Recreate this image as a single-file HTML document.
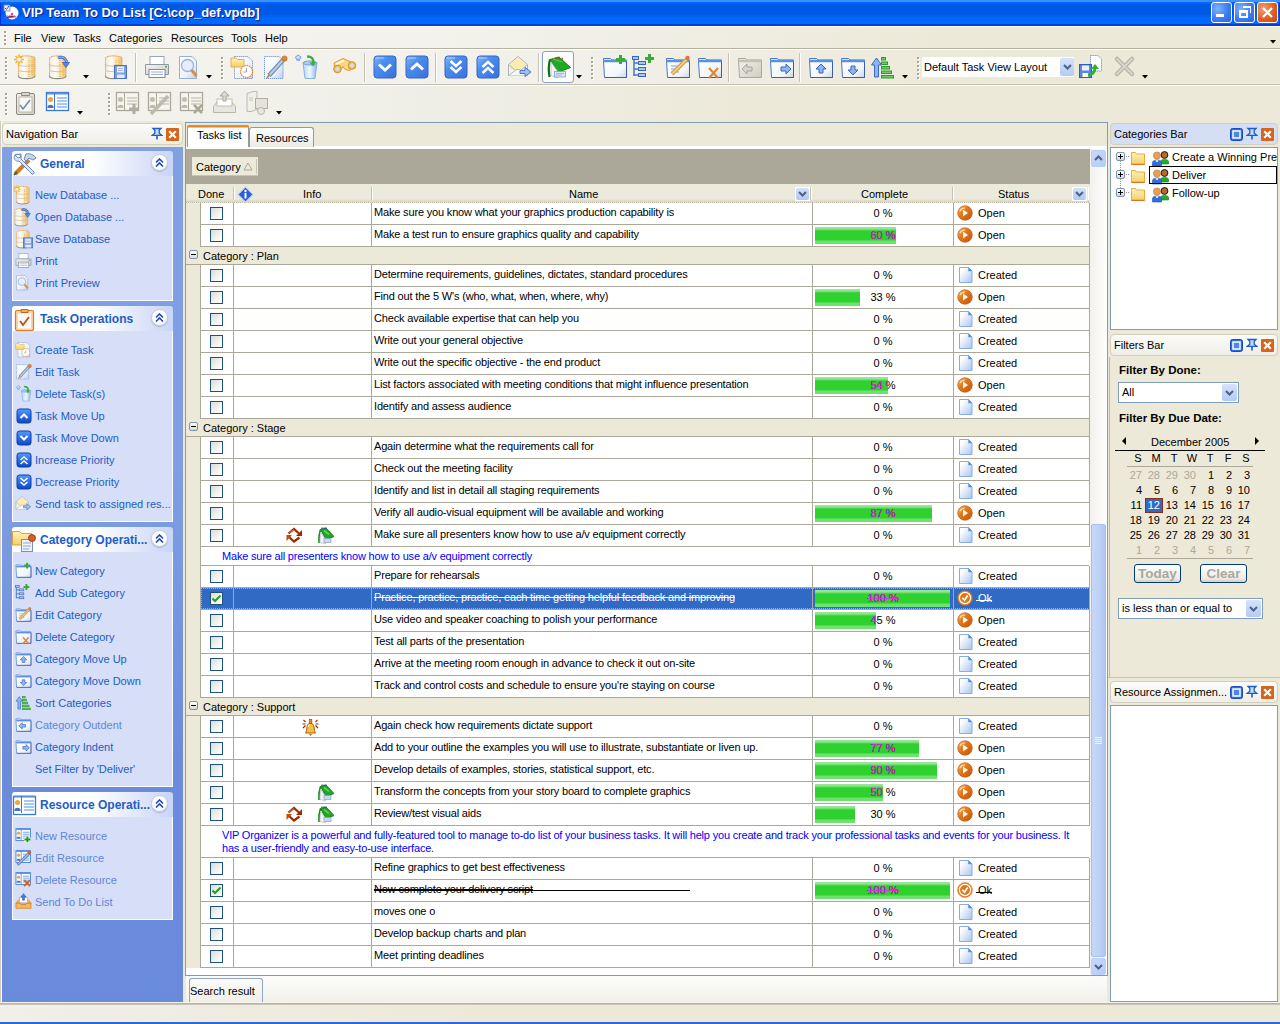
<!DOCTYPE html><html><head><meta charset="utf-8"><style>
*{margin:0;padding:0;box-sizing:border-box}
html,body{width:1280px;height:1024px;overflow:hidden;background:#ece9d8}
body{position:relative;font-family:"Liberation Sans",sans-serif;font-size:11px;color:#000}
div,svg{position:absolute}
.t{white-space:pre;line-height:13px;font-size:11px}
.ic{overflow:visible}
</style></head><body>
<svg width="0" height="0" style="position:absolute;left:0;top:0"><defs>
<linearGradient id="gCyl" x1="0" x2="1" y1="0" y2="0"><stop offset="0" stop-color="#f0ece0"/><stop offset=".35" stop-color="#fdfcf6"/><stop offset=".7" stop-color="#f2e2b8"/><stop offset="1" stop-color="#e8c070"/></linearGradient>
<linearGradient id="gBlueBtn" x1="0" x2="1" y1="0" y2="1"><stop offset="0" stop-color="#8ab8f8"/><stop offset=".35" stop-color="#4a8ef0"/><stop offset="1" stop-color="#3a70d8"/></linearGradient>
<linearGradient id="gPage" x1="0" x2="1" y1="0" y2="1"><stop offset="0" stop-color="#fff"/><stop offset=".6" stop-color="#eef3fc"/><stop offset="1" stop-color="#bcd0f0"/></linearGradient>
<linearGradient id="gFolderW" x1="0" x2="1" y1="0" y2="1"><stop offset="0" stop-color="#fff"/><stop offset=".7" stop-color="#f2f5fb"/><stop offset="1" stop-color="#c9d6ea"/></linearGradient>
<linearGradient id="gFolderY" x1="0" x2="0" y1="0" y2="1"><stop offset="0" stop-color="#fff2b8"/><stop offset="1" stop-color="#f3cf6a"/></linearGradient>
<linearGradient id="gOrange" x1="0" x2="1" y1="0" y2="1"><stop offset="0" stop-color="#f7c080"/><stop offset=".4" stop-color="#e57a1c"/><stop offset="1" stop-color="#c2520a"/></linearGradient>
<linearGradient id="gGreen" x1="0" x2="1" y1="0" y2="1"><stop offset="0" stop-color="#6ed66e"/><stop offset="1" stop-color="#18961c"/></linearGradient>
<linearGradient id="gBin" x1="0" x2="1"><stop offset="0" stop-color="#b8d6f8"/><stop offset=".5" stop-color="#eef6ff"/><stop offset="1" stop-color="#88b4e8"/></linearGradient>
<linearGradient id="gGrey" x1="0" x2="1" y1="0" y2="1"><stop offset="0" stop-color="#f4f3ee"/><stop offset="1" stop-color="#cfccc0"/></linearGradient>
<symbol id="tb_newdb" viewBox="0 0 26 26"><g transform="translate(0 0)"><path d="M4.5 4.5C4.5 1 21 1 21 4.5V22C21 25.5 4.5 25.5 4.5 22Z" fill="url(#gCyl)"/><path d="M4.5 22V4.5C4.5 1 21 1 21 4.5V22" stroke="#eea040" stroke-width="1.1" stroke-dasharray="1.2 .6" fill="none"/><path d="M4.5 22C4.5 25.5 21 25.5 21 22" stroke="#8c8a7c" stroke-width="1.2" fill="none"/><path d="M5 11c2 1.5 13 1.5 15 0M5 16.5c2 1.5 13 1.5 15 0" stroke="#c8c0a8" stroke-width=".9" fill="none"/><path d="M15 6v17M18 6v16" stroke="#f0b050" stroke-width="1.2" stroke-dasharray="1 1"/></g><path d="M5 .5v10M0 5.5h10M1.5 2l7 7M8.5 2l-7 7" stroke="#f8b030" stroke-width="1.6"/><circle cx="5" cy="5.5" r="2" fill="#fff8d0"/></symbol><symbol id="tb_opendb" viewBox="0 0 26 26"><g transform="translate(-2 0)"><path d="M4.5 4.5C4.5 1 21 1 21 4.5V22C21 25.5 4.5 25.5 4.5 22Z" fill="url(#gCyl)"/><path d="M4.5 22V4.5C4.5 1 21 1 21 4.5V22" stroke="#eea040" stroke-width="1.1" stroke-dasharray="1.2 .6" fill="none"/><path d="M4.5 22C4.5 25.5 21 25.5 21 22" stroke="#8c8a7c" stroke-width="1.2" fill="none"/><path d="M5 11c2 1.5 13 1.5 15 0M5 16.5c2 1.5 13 1.5 15 0" stroke="#c8c0a8" stroke-width=".9" fill="none"/><path d="M15 6v17M18 6v16" stroke="#f0b050" stroke-width="1.2" stroke-dasharray="1 1"/></g><path d="M11 4c4-2 7 0 9 4" stroke="#3a6ad0" stroke-width="3" fill="none"/><path d="M11 4c4-2 7 0 9 4" stroke="#8ab0f0" stroke-width="1.2" fill="none"/><path d="M15.5 8.5l7 0-3.5 5z" fill="#5a88e0" stroke="#2a5ac8" stroke-width=".8"/></symbol><symbol id="tb_savedb" viewBox="0 0 26 26"><path d="M4.5 4.5C4.5 1 21 1 21 4.5V22C21 25.5 4.5 25.5 4.5 22Z" fill="url(#gCyl)"/><path d="M4.5 22V4.5C4.5 1 21 1 21 4.5V22" stroke="#eea040" stroke-width="1.1" stroke-dasharray="1.2 .6" fill="none"/><path d="M4.5 22C4.5 25.5 21 25.5 21 22" stroke="#8c8a7c" stroke-width="1.2" fill="none"/><path d="M5 11c2 1.5 13 1.5 15 0M5 16.5c2 1.5 13 1.5 15 0" stroke="#c8c0a8" stroke-width=".9" fill="none"/><path d="M15 6v17M18 6v16" stroke="#f0b050" stroke-width="1.2" stroke-dasharray="1 1"/><rect x="13.5" y="11.5" width="12" height="13" fill="#7a9ee0" stroke="#4a70c0"/><rect x="16" y="12.5" width="7" height="6" fill="#f0f4fc"/><path d="M17 14.5h5M17 16.5h5" stroke="#8aa8e0" stroke-width=".8"/><rect x="16" y="20.5" width="7.5" height="3.5" fill="#e8eaf0"/></symbol><symbol id="tb_print" viewBox="0 0 26 26"><rect x="6" y="2.5" width="14" height="8" fill="#fff" stroke="#9aa6b8"/><path d="M1.5 10.5h23v10h-23z" fill="url(#gGrey)" stroke="#8d96a8"/><rect x="5" y="15.5" width="16" height="8" fill="#fff" stroke="#7c8aa8"/><path d="M7 18h12M7 20.5h12" stroke="#9ab0d8"/><rect x="21" y="12" width="2" height="1.5" fill="#30c030"/></symbol><symbol id="tb_preview" viewBox="0 0 26 26"><path d="M2.5 2.5H15l4.5 4.5V24.5H2.5Z" fill="url(#gPage)" stroke="#9aaed0"/><circle cx="10.5" cy="11.5" r="6" fill="#e6eefa" stroke="#9ab4d8" stroke-width="1.3"/><path d="M14.5 16l5 6" stroke="#d89040" stroke-width="3"/></symbol><symbol id="tb_createtask" viewBox="0 0 26 26"><path d="M4.5 2.5H18l4.5 4.5V24.5H4.5Z" fill="url(#gPage)" stroke="#7a9ad0" stroke-dasharray="1.3 .7"/><path d="M1 4h5l1.5 1.5H14V13H1Z" fill="url(#gFolderY)" stroke="#e8b050"/><circle cx="16.5" cy="17.5" r="6" fill="#fff" stroke="#e08838" stroke-width="1.3" stroke-dasharray="1.5 .8"/><path d="M16.5 14v4h-3" stroke="#a0a0a0" fill="none"/></symbol><symbol id="tb_edittask" viewBox="0 0 26 26"><path d="M2.5 2.5H17l4 4V24.5H2.5Z" fill="url(#gPage)" stroke="#7a9ad0" stroke-dasharray="1.3 .7"/><path d="M7 21.5L22 5" stroke="#7a8aa8" stroke-width="4.5"/><path d="M7.5 21L21.5 5.5" stroke="#b8cdf0" stroke-width="2"/><circle cx="22.5" cy="4.5" r="2.6" fill="#e08838" stroke="#b05a18" stroke-width=".6"/><path d="M5 24l2.5-3.5" stroke="#d07a30" stroke-width="1.6"/></symbol><symbol id="tb_deltask" viewBox="0 0 26 26"><path d="M10 8.5h14l-2 16H12Z" fill="url(#gBin)" stroke="#8ab0e0"/><ellipse cx="17" cy="9" rx="7" ry="2" fill="#a8cbf4" stroke="#7aa4dc"/><path d="M2 3.5l3-2.5 3 2-2 3.5zM3 6h4" stroke="#7a9ae0" fill="#c8dcf8"/><path d="M14 2.5c5 0 7 2.5 6 7" stroke="#3cb03c" stroke-width="2.5" fill="none"/><path d="M16.5 8.5l3.5 4 3-4.5z" fill="#3cb03c"/></symbol><symbol id="tb_binoc" viewBox="0 0 26 26"><path d="M3 9l9-4.5 9 4-2 8-5-1-2-3-2 3-6 2z" fill="#f8d880" stroke="#e09830"/><circle cx="6.5" cy="15" r="3.8" fill="#f4c050" stroke="#d89030"/><circle cx="21" cy="11.5" r="3.8" fill="#f4c050" stroke="#d89030"/><circle cx="6.5" cy="15" r="2" fill="#cde0f8"/><circle cx="21" cy="11.5" r="2" fill="#cde0f8"/><path d="M5 10l8-3.5" stroke="#fff" stroke-width="1.5"/></symbol><symbol id="tb_down" viewBox="0 0 26 26"><rect x="2" y="2" width="22" height="22" rx="3" fill="url(#gBlueBtn)" stroke="#3467c6"/><path d="M4 4h8" stroke="#b8d4ff" stroke-width="1.5" opacity=".6"/><path d="M7 10.5l6 5.5 6-5.5" stroke="#fff" stroke-width="3" fill="none"/></symbol><symbol id="tb_up" viewBox="0 0 26 26"><rect x="2" y="2" width="22" height="22" rx="3" fill="url(#gBlueBtn)" stroke="#3467c6"/><path d="M4 4h8" stroke="#b8d4ff" stroke-width="1.5" opacity=".6"/><path d="M7 15.5l6-5.5 6 5.5" stroke="#fff" stroke-width="3" fill="none"/></symbol><symbol id="tb_ddown" viewBox="0 0 26 26"><rect x="2" y="2" width="22" height="22" rx="3" fill="url(#gBlueBtn)" stroke="#3467c6"/><path d="M4 4h8" stroke="#b8d4ff" stroke-width="1.5" opacity=".6"/><path d="M7.5 7l5.5 5 5.5-5M7.5 13l5.5 5 5.5-5" stroke="#fff" stroke-width="2.5" fill="none"/></symbol><symbol id="tb_dup" viewBox="0 0 26 26"><rect x="2" y="2" width="22" height="22" rx="3" fill="url(#gBlueBtn)" stroke="#3467c6"/><path d="M4 4h8" stroke="#b8d4ff" stroke-width="1.5" opacity=".6"/><path d="M7.5 13l5.5-5 5.5 5M7.5 19l5.5-5 5.5 5" stroke="#fff" stroke-width="2.5" fill="none"/></symbol><symbol id="tb_mail" viewBox="0 0 26 26"><path d="M1.5 10.5L11 2.5l9.5 8V21.5h-19z" fill="#f4f4f4" stroke="#a8b0c0"/><path d="M3 10l8-6 8 6v6H3z" fill="#fbecb0"/><path d="M1.5 21.5l8-6h3l8 6M1.5 10.5l7 6M20.5 10.5l-7 6" stroke="#b0b8c8" fill="#f8f8f8"/><path d="M13 16.5h5v-3l6 4.5-6 4.5v-3h-5z" fill="#a0c0f0" stroke="#4a78d0"/></symbol><symbol id="tb_notebook" viewBox="0 0 26 26"><path d="M5 5.5L14 3 25.5 13.5 13 18.5z" fill="#22a822" stroke="#137a13" stroke-width=".9"/><path d="M8 5l9 3" stroke="#5ad05a" stroke-width="1.2"/><path d="M5 5.5C3.5 11 3.5 17 4.5 23" stroke="#0e6e0e" stroke-width="2.2" fill="none"/><path d="M6 8l7 10v6l-7-2.5z" fill="#f6f6f6" stroke="#b0bcd0" stroke-width=".8"/><rect x="9.5" y="17.5" width="11" height="5.5" fill="#dce6f8" stroke="#8aa0c8" stroke-width=".8"/><path d="M11 19.5h8M11 21h6" stroke="#8aa8d8" stroke-width=".7"/><path d="M11 3.2l.5 2M14 2.8l.5 2M17 3.6l.5 2" stroke="#d03030" stroke-width="1.2"/></symbol><symbol id="tb_newcat" viewBox="0 0 26 26"><path d="M1.5 6.5V4.5h7l1.5 1.5H24.5V23.5H2.5Z" fill="url(#gFolderW)" stroke="#4a78c8"/><path d="M2 7H24.5" stroke="#5a90e0" stroke-width="2.5"/><path d="M3 23.5H24.5V8" stroke="#3c5ea8" stroke-width="1" fill="none"/><path d="M18.5 1v9M14 5.5h9" stroke="#3aa83a" stroke-width="3"/></symbol><symbol id="tb_subcat" viewBox="0 0 26 26"><path d="M2 4v18M2 9h4M2 15h4M2 21h4" stroke="#4a78d0" stroke-width="1.5"/><rect x="0.5" y="2.5" width="6" height="3" fill="#a8c8f4" stroke="#3a68c0"/><rect x="6.5" y="7.5" width="7" height="3" fill="#a8c8f4" stroke="#3a68c0"/><rect x="6.5" y="13.5" width="7" height="3" fill="#a8c8f4" stroke="#3a68c0"/><rect x="6.5" y="19.5" width="7" height="3" fill="#a8c8f4" stroke="#3a68c0"/><path d="M17.5 0v9M13 4.5h9" stroke="#3aa83a" stroke-width="3"/></symbol><symbol id="tb_editcat" viewBox="0 0 26 26"><path d="M1.5 6.5V4.5h7l1.5 1.5H24.5V23.5H2.5Z" fill="url(#gFolderW)" stroke="#4a78c8"/><path d="M2 7H24.5" stroke="#5a90e0" stroke-width="2.5"/><path d="M3 23.5H24.5V8" stroke="#3c5ea8" stroke-width="1" fill="none"/><path d="M6 12h10M6 15h9M6 18h8" stroke="#7aa0e0"/><path d="M7 20L22 5" stroke="#d8a040" stroke-width="4"/><path d="M7.5 19.5L21.5 5.5" stroke="#f8d890" stroke-width="1.5"/><circle cx="22.5" cy="4" r="2.2" fill="#e07050"/></symbol><symbol id="tb_delcat" viewBox="0 0 26 26"><path d="M1.5 6.5V4.5h7l1.5 1.5H24.5V23.5H2.5Z" fill="url(#gFolderW)" stroke="#4a78c8"/><path d="M2 7H24.5" stroke="#5a90e0" stroke-width="2.5"/><path d="M3 23.5H24.5V8" stroke="#3c5ea8" stroke-width="1" fill="none"/><path d="M12 14l9 10M21 14l-9 10" stroke="#e08830" stroke-width="2.2"/></symbol><symbol id="tb_catleft" viewBox="0 0 26 26"><path d="M1.5 6.5V4.5h7l1.5 1.5H24.5V23.5H2.5Z" fill="url(#gGrey)" stroke="#aaa898"/><path d="M2 7H24.5" stroke="#c5c2b4" stroke-width="2.5"/><path d="M5 15l5-5v3h5v4h-5v3z" fill="#d8d6cc" stroke="#a8a698"/></symbol><symbol id="tb_catright" viewBox="0 0 26 26"><path d="M1.5 6.5V4.5h7l1.5 1.5H24.5V23.5H2.5Z" fill="url(#gFolderW)" stroke="#4a78c8"/><path d="M2 7H24.5" stroke="#5a90e0" stroke-width="2.5"/><path d="M3 23.5H24.5V8" stroke="#3c5ea8" stroke-width="1" fill="none"/><path d="M22 15l-5-5v3h-5v4h5v3z" fill="#90b4f0" stroke="#3a68c0"/></symbol><symbol id="tb_catup" viewBox="0 0 26 26"><path d="M1.5 6.5V4.5h7l1.5 1.5H24.5V23.5H2.5Z" fill="url(#gFolderW)" stroke="#4a78c8"/><path d="M2 7H24.5" stroke="#5a90e0" stroke-width="2.5"/><path d="M3 23.5H24.5V8" stroke="#3c5ea8" stroke-width="1" fill="none"/><path d="M13 10l-5 5h3v4h4v-4h3z" fill="#90b4f0" stroke="#3a68c0"/></symbol><symbol id="tb_catdown" viewBox="0 0 26 26"><path d="M1.5 6.5V4.5h7l1.5 1.5H24.5V23.5H2.5Z" fill="url(#gFolderW)" stroke="#4a78c8"/><path d="M2 7H24.5" stroke="#5a90e0" stroke-width="2.5"/><path d="M3 23.5H24.5V8" stroke="#3c5ea8" stroke-width="1" fill="none"/><path d="M13 21l-5-5h3v-4h4v4h3z" fill="#90b4f0" stroke="#3a68c0"/></symbol><symbol id="tb_sort" viewBox="0 0 26 26"><path d="M4.5 23V11H1.5L6.5 4l5 7H8.5v12z" fill="#90b4f0" stroke="#3a68c0"/><rect x="11.5" y="3.5" width="4" height="2.5" fill="#70c870" stroke="#2e9a2e"/><rect x="11.5" y="8" width="6" height="2.5" fill="#70c870" stroke="#2e9a2e"/><rect x="11.5" y="12.5" width="8" height="2.5" fill="#70c870" stroke="#2e9a2e"/><rect x="11.5" y="17" width="10" height="2.5" fill="#70c870" stroke="#2e9a2e"/><rect x="11.5" y="21.5" width="12" height="2.5" fill="#70c870" stroke="#2e9a2e"/></symbol><symbol id="tb_savelayout" viewBox="0 0 26 26"><path d="M12.5 1.5H20l3.5 3.5V17h-11z" fill="#fff" stroke="#7a9ad0" stroke-dasharray="1.3 .7"/><rect x="1.5" y="10.5" width="12" height="13" fill="#5a86d8" stroke="#2e5cb8"/><rect x="4" y="11.5" width="7" height="5" fill="#e8f0fc"/><rect x="4.5" y="19" width="6" height="4" fill="#fff"/><path d="M10 21c4 0 7-3 7-7" stroke="#30b030" stroke-width="3" fill="none"/><path d="M13 15l4-5 4 5z" fill="#30b030"/></symbol><symbol id="tb_xdis" viewBox="0 0 26 26"><path d="M5 5l15 15M20 5L5 20" stroke="#b6b4a8" stroke-width="4.5" stroke-linecap="round"/><path d="M5 5l15 15M20 5L5 20" stroke="#d8d6cc" stroke-width="2" stroke-linecap="round"/></symbol><symbol id="tb_clip" viewBox="0 0 26 26"><rect x="2.5" y="3.5" width="18" height="21" rx="1.5" fill="url(#gGrey)" stroke="#8c8a80"/><rect x="5" y="7" width="13" height="15" fill="#f8f8f6" stroke="#b8b6aa"/><path d="M7.5 2.5h8v3h-8z" fill="#dcdad0" stroke="#8c8a80"/><path d="M6 15l3 4 7-9" stroke="#7a8aa8" stroke-width="1.6" fill="none"/></symbol><symbol id="tb_res" viewBox="0 0 26 26"><rect x="1.5" y="2.5" width="22" height="18" fill="#fff" stroke="#3a78d8" stroke-width="1.3"/><path d="M2 3.5H23" stroke="#5a90e8" stroke-width="2"/><path d="M9.5 3v17" stroke="#3a78d8"/><circle cx="5.5" cy="9.5" r="2.5" fill="#f0a830"/><path d="M2.5 17c0-3 6-3 6 0v1h-6z" fill="#4a70c8"/><path d="M12 8h10M12 11h10M12 14h10M12 17h10" stroke="#4a90e8" stroke-width="1.2"/></symbol><symbol id="tb_resadd" viewBox="0 0 26 26"><rect x="1.5" y="2.5" width="22" height="18" fill="#f6f5f0" stroke="#aaa898" stroke-width="1.3"/><path d="M9.5 3v17" stroke="#aaa898"/><circle cx="5.5" cy="9.5" r="2.5" fill="#c0beb2"/><path d="M2.5 17c0-3 6-3 6 0v1h-6z" fill="#bcbaae"/><path d="M12 8h10M12 11h10M12 14h10" stroke="#b5b3a6" stroke-width="1.2"/><path d="M19 14v10M14 19h10" stroke="#b0aea2" stroke-width="3"/></symbol><symbol id="tb_resedit" viewBox="0 0 26 26"><rect x="1.5" y="2.5" width="22" height="18" fill="#f6f5f0" stroke="#aaa898" stroke-width="1.3"/><path d="M9.5 3v17" stroke="#aaa898"/><circle cx="5.5" cy="9.5" r="2.5" fill="#c0beb2"/><path d="M2.5 17c0-3 6-3 6 0v1h-6z" fill="#bcbaae"/><path d="M12 8h10M12 11h10M12 14h10" stroke="#b5b3a6" stroke-width="1.2"/><path d="M4 24L21 6" stroke="#bdbbb0" stroke-width="3.5"/></symbol><symbol id="tb_resdel" viewBox="0 0 26 26"><rect x="1.5" y="2.5" width="22" height="18" fill="#f6f5f0" stroke="#aaa898" stroke-width="1.3"/><path d="M9.5 3v17" stroke="#aaa898"/><circle cx="5.5" cy="9.5" r="2.5" fill="#c0beb2"/><path d="M2.5 17c0-3 6-3 6 0v1h-6z" fill="#bcbaae"/><path d="M12 8h10M12 11h10M12 14h10" stroke="#b5b3a6" stroke-width="1.2"/><path d="M15 15l8 8M23 15l-8 8" stroke="#a8a698" stroke-width="2.5"/></symbol><symbol id="tb_send" viewBox="0 0 26 26"><path d="M1.5 16.5l4-5h14l4 5v6h-22z" fill="#e8e6de" stroke="#b8b6aa"/><rect x="5" y="9" width="15" height="7" fill="#fff" stroke="#c0beb2"/><path d="M12.5 1l-4.5 5h3v5h3V6h3z" fill="#dcdad0" stroke="#a8a698"/></symbol><symbol id="tb_rescomp" viewBox="0 0 26 26"><path d="M3 3.5l6-2h4v18l-6 2H3z" fill="#f0efe8" stroke="#bcbab0"/><rect x="11.5" y="8.5" width="12" height="10" fill="#e4e2da" stroke="#b0aea2"/><circle cx="17" cy="21" r="3.5" fill="#e8e6de" stroke="#b8b6aa"/><path d="M5 8h4M5 10h4" stroke="#c8c6ba"/></symbol><symbol id="appicon" viewBox="0 0 16 16"><circle cx="9" cy="9" r="6.5" fill="#fff"/><rect x="1" y="1" width="6" height="6" fill="#e8ecf4" stroke="#7a8ab0" stroke-width=".8"/><path d="M2 4l1.5 1.5L6 2" stroke="#3a5ab0" fill="none"/><path d="M3 14c2-2 6-3 10-1" stroke="#e03a9a" stroke-width="2.5" stroke-dasharray="1 1"/><circle cx="9" cy="10" r="1.2" fill="#d040a0"/></symbol><symbol id="hb_close" viewBox="0 0 13 13"><rect x="0" y="0" width="13" height="13" rx="1" fill="#d8641c"/><path d="M3.2 3.2l6.6 6.6M9.8 3.2l-6.6 6.6" stroke="#fff" stroke-width="2.2"/></symbol><symbol id="hb_pin" viewBox="0 0 12 13"><path d="M2 1.5h8l-1.8 1.8v3l2.5 2H1.3l2.5-2v-3z" fill="#c8dcfa" stroke="#1e5cc8" stroke-width="1.3"/><path d="M6 8.5v4" stroke="#1e5cc8" stroke-width="1.6"/></symbol><symbol id="hb_max" viewBox="0 0 13 13"><rect x=".5" y=".5" width="12" height="12" rx="2" fill="#2f6ee0" stroke="#1a4cc0"/><rect x="3" y="3" width="7" height="7" fill="#4a88f0" stroke="#fff" stroke-width="1.5"/></symbol><symbol id="gs_open" viewBox="0 0 16 16"><circle cx="8" cy="8" r="7.3" fill="url(#gOrange)" stroke="#b84e10" stroke-width=".6"/><path d="M6 4.5v7l5-3.5z" fill="#fff8e8"/><path d="M3 6c1-2 3-3 5-3" stroke="#fde0b0" stroke-width="1.2" fill="none"/></symbol><symbol id="gs_ok" viewBox="0 0 16 16"><circle cx="8" cy="8" r="7.5" fill="#e8801c" stroke="#d06010" stroke-width=".6" stroke-dasharray="1 .6"/><circle cx="8" cy="8" r="5.6" fill="#e07818" stroke="#fff" stroke-width="1.2"/><path d="M5.3 7.8l2.2 2.4 3.2-4.6" stroke="#fff" stroke-width="1.7" fill="none"/></symbol><symbol id="gs_created" viewBox="0 0 16 16"><linearGradient id="gDoc" x1="0" y1="0" x2="1" y2="1"><stop offset=".2" stop-color="#fff"/><stop offset="1" stop-color="#a8c4f0"/></linearGradient><path d="M.5 .5H9.5l3.5 3.5V15.5H.5z" fill="url(#gDoc)" stroke="#86acea" stroke-width="1"/><path d="M9.5 .5V4H13z" fill="#3e8ef0" stroke="#6a9ae0" stroke-width=".6"/></symbol><symbol id="hd_info" viewBox="0 0 17 17"><path d="M8.5 .8L16.2 8.5 8.5 16.2 .8 8.5z" fill="#2a5ed8" stroke="#c8d8f8" stroke-width="1.2"/><circle cx="8.5" cy="5" r="1.2" fill="#fff"/><rect x="7.5" y="7" width="2" height="5.5" fill="#fff"/></symbol><symbol id="gi_recur" viewBox="0 0 16 16"><path d="M2.5 6.5L8 2l5 4.5" stroke="#a02a00" stroke-width="2.2" fill="none"/><path d="M10 9h6.5V2.5z" fill="#a02a00"/><path d="M13.5 10.5L8 14.5 2.5 9.5" stroke="#a02a00" stroke-width="2.2" fill="none"/><path d="M6 8H.5v6z" fill="#c04a08"/><path d="M3 6l5-3.5" stroke="#f08030" stroke-width=".8"/></symbol><symbol id="gi_note" viewBox="0 0 18 18"><path d="M4.5 2.5L10 1l8 8.5-8 3z" fill="#22a822" stroke="#0e7a0e" stroke-width=".9"/><path d="M8 3.5l5 4" stroke="#6ad86a" stroke-width="1.4"/><path d="M5 1.2h6" stroke="#2a50c0" stroke-width="1"/><path d="M4.5 2.5C3 7 2.5 12 3 16" stroke="#0e8a0e" stroke-width="1.6" fill="none"/><path d="M4.5 5l5 7.5v4.5L4 15.5z" fill="#f4f4f4" stroke="#b0bcd0" stroke-width=".7"/><rect x="8" y="11.5" width="7" height="4" fill="#c8d8f4" stroke="#8aa0c8" stroke-width=".7"/></symbol><symbol id="gi_bell" viewBox="0 0 19 19"><path d="M4.5 15c1-1 1-3 1.5-6 .5-3 1.5-3.5 3.5-3.5s3 .5 3.5 3.5c.5 3 .5 5 1.5 6z" fill="#f6c040" stroke="#b85808" stroke-width="1"/><rect x="8.3" y="1.5" width="2.5" height="4" fill="#e89030" stroke="#a04808" stroke-width=".7"/><path d="M8 16l1.5 2 1.5-2" fill="#c06010"/><path d="M1.5 6h3M14.5 6h3M2.5 2l2 2M16.5 2l-2 2M2 10l2.5-2.5M17 10l-2.5-2.5" stroke="#902a00" stroke-width="1.1"/><path d="M7 9c.5-2 1-2.5 2-2.5" stroke="#fff8c0" stroke-width="1.2" fill="none"/></symbol><symbol id="ct_folder" viewBox="0 0 14 13"><path d="M.5 2.5V.5h4l1 1.5H13.5V12.5H.5z" fill="url(#gFolderY)" stroke="#e8a030" stroke-width=".9"/><path d="M.5 12.5h13" stroke="#d87818" stroke-width="1.5"/></symbol><symbol id="ct_people" viewBox="0 0 17 16"><circle cx="12.5" cy="4" r="3.4" fill="#b8682c" stroke="#1a1a1a" stroke-width="1"/><path d="M8.5 13V10.5c0-2.8 8-2.8 8 0V13z" fill="#1fae2a" stroke="#108010" stroke-width=".6"/><circle cx="5" cy="4.5" r="3.6" fill="#e8a050" stroke="#b87a38" stroke-width=".6"/><path d="M.5 15V11.5c0-3.5 9-3.5 9 0V15z" fill="#2f6fe0" stroke="#1a50b0" stroke-width=".6"/><path d="M4 9l1 2 1-2" stroke="#fff" stroke-width="1" fill="none"/></symbol><symbol id="ng_general" viewBox="0 0 26 24"><path d="M3 22L17 8" stroke="#d87a28" stroke-width="4"/><path d="M2 23l3-3" stroke="#208030" stroke-width="2"/><path d="M3 3c3-2 7 0 6 4l13 13c1 1-1 3-2 2L7 9C3 10 1 6 3 3l3 3 3-1 0-3z" fill="#dce8f8" stroke="#6a88b8" stroke-width="1"/><path d="M14 2c4-1 8 1 10 4l-3 2-4-2-3 3-2-2z" fill="#c8d8ec" stroke="#6a88b8" stroke-width="1"/></symbol><symbol id="ng_task" viewBox="0 0 26 24"><rect x="3.5" y="3.5" width="18" height="20" rx="1.5" fill="#f4d8a8" stroke="#d87a28" stroke-width="1.2"/><rect x="6" y="6.5" width="13" height="15" fill="#fbfaf6"/><path d="M9 2.5h7v3H9z" fill="#e8b070" stroke="#c06820"/><path d="M8 14l3 4 6-8" stroke="#c05010" stroke-width="1.8" fill="none"/></symbol><symbol id="ng_cat" viewBox="0 0 26 24"><path d="M.5 7V3.5h7l2 2h10V17H.5z" fill="url(#gFolderY)" stroke="#e0a040"/><rect x="9.5" y="11.5" width="11" height="12" fill="#eef2fa" stroke="#7a90b8"/><path d="M11 15h8M11 18h8M11 21h6" stroke="#90a8d0"/><circle cx="20" cy="10" r="3.5" fill="#d86020" stroke="#8a3010" stroke-width=".8"/></symbol><symbol id="ng_res" viewBox="0 0 26 24"><rect x="1.5" y="3.5" width="22" height="18" fill="#fff" stroke="#3a78d8" stroke-width="1.3"/><path d="M2 3.5H23" stroke="#5a90e8" stroke-width="2"/><path d="M9.5 3v17" stroke="#3a78d8"/><circle cx="5.5" cy="9.5" r="2.5" fill="#f0a830"/><path d="M2.5 17c0-3 6-3 6 0v1h-6z" fill="#4a70c8"/><path d="M12 8h10M12 11h10M12 14h10M12 17h10" stroke="#4a90e8" stroke-width="1.2"/></symbol><symbol id="ni_up" viewBox="0 0 16 16"><linearGradient id="gNavBtn" x1="0" y1="0" x2="0" y2="1"><stop offset="0" stop-color="#5a9af8"/><stop offset=".5" stop-color="#2a6ee8"/><stop offset="1" stop-color="#0c48c0"/></linearGradient><rect x="1" y="1" width="14" height="14" rx="2.5" fill="url(#gNavBtn)" stroke="#0a3ca8"/><path d="M4.5 10l3.5-3.5 3.5 3.5" stroke="#fff" stroke-width="2" fill="none"/></symbol><symbol id="ni_down" viewBox="0 0 16 16"><linearGradient id="gNavBtn" x1="0" y1="0" x2="0" y2="1"><stop offset="0" stop-color="#5a9af8"/><stop offset=".5" stop-color="#2a6ee8"/><stop offset="1" stop-color="#0c48c0"/></linearGradient><rect x="1" y="1" width="14" height="14" rx="2.5" fill="url(#gNavBtn)" stroke="#0a3ca8"/><path d="M4.5 6l3.5 3.5 3.5-3.5" stroke="#fff" stroke-width="2" fill="none"/></symbol><symbol id="ni_dup" viewBox="0 0 16 16"><linearGradient id="gNavBtn" x1="0" y1="0" x2="0" y2="1"><stop offset="0" stop-color="#5a9af8"/><stop offset=".5" stop-color="#2a6ee8"/><stop offset="1" stop-color="#0c48c0"/></linearGradient><rect x="1" y="1" width="14" height="14" rx="2.5" fill="url(#gNavBtn)" stroke="#0a3ca8"/><path d="M4.5 8l3.5-3 3.5 3M4.5 12l3.5-3 3.5 3" stroke="#fff" stroke-width="1.6" fill="none"/></symbol><symbol id="ni_ddown" viewBox="0 0 16 16"><linearGradient id="gNavBtn" x1="0" y1="0" x2="0" y2="1"><stop offset="0" stop-color="#5a9af8"/><stop offset=".5" stop-color="#2a6ee8"/><stop offset="1" stop-color="#0c48c0"/></linearGradient><rect x="1" y="1" width="14" height="14" rx="2.5" fill="url(#gNavBtn)" stroke="#0a3ca8"/><path d="M4.5 4l3.5 3 3.5-3M4.5 8l3.5 3 3.5-3" stroke="#fff" stroke-width="1.6" fill="none"/></symbol><symbol id="ni_newdb" viewBox="0 0 26 26"><use href="#tb_newdb" width="26" height="26"/></symbol><symbol id="ni_opendb" viewBox="0 0 26 26"><use href="#tb_opendb" width="26" height="26"/></symbol><symbol id="ni_savedb" viewBox="0 0 26 26"><use href="#tb_savedb" width="26" height="26"/></symbol><symbol id="ni_print" viewBox="0 0 26 26"><use href="#tb_print" width="26" height="26"/></symbol><symbol id="ni_preview" viewBox="0 0 26 26"><use href="#tb_preview" width="26" height="26"/></symbol><symbol id="ni_createtask" viewBox="0 0 26 26"><use href="#tb_createtask" width="26" height="26"/></symbol><symbol id="ni_edittask" viewBox="0 0 26 26"><use href="#tb_edittask" width="26" height="26"/></symbol><symbol id="ni_deltask" viewBox="0 0 26 26"><use href="#tb_deltask" width="26" height="26"/></symbol><symbol id="ni_send" viewBox="0 0 26 26"><use href="#tb_mail" width="26" height="26"/></symbol><symbol id="ni_newcat" viewBox="0 0 26 26"><use href="#tb_newcat" width="26" height="26"/></symbol><symbol id="ni_subcat" viewBox="0 0 26 26"><use href="#tb_subcat" width="26" height="26"/></symbol><symbol id="ni_editcat" viewBox="0 0 26 26"><use href="#tb_editcat" width="26" height="26"/></symbol><symbol id="ni_delcat" viewBox="0 0 26 26"><use href="#tb_delcat" width="26" height="26"/></symbol><symbol id="ni_catup" viewBox="0 0 26 26"><use href="#tb_catup" width="26" height="26"/></symbol><symbol id="ni_catdown" viewBox="0 0 26 26"><use href="#tb_catdown" width="26" height="26"/></symbol><symbol id="ni_sort" viewBox="0 0 26 26"><use href="#tb_sort" width="26" height="26"/></symbol><symbol id="ni_indent" viewBox="0 0 26 26"><use href="#tb_catright" width="26" height="26"/></symbol><symbol id="ni_resadd" viewBox="0 0 26 26"><rect x="1.5" y="2.5" width="22" height="18" fill="#fff" stroke="#3a78d8" stroke-width="1.3"/><path d="M2 3.5H23" stroke="#5a90e8" stroke-width="2"/><path d="M9.5 3v17" stroke="#3a78d8"/><circle cx="5.5" cy="9.5" r="2.5" fill="#f0a830"/><path d="M2.5 17c0-3 6-3 6 0v1h-6z" fill="#4a70c8"/><path d="M12 8h10M12 11h10M12 14h10M12 17h10" stroke="#4a90e8" stroke-width="1.2"/><path d="M19 14v10M14 19h10" stroke="#fff" stroke-width="5"/><path d="M19 14.5v9M14.5 19h9" stroke="#1a9a1a" stroke-width="3"/></symbol><symbol id="ni_resedit" viewBox="0 0 26 26"><rect x="1.5" y="2.5" width="22" height="18" fill="#fff" stroke="#3a78d8" stroke-width="1.3"/><path d="M2 3.5H23" stroke="#5a90e8" stroke-width="2"/><path d="M9.5 3v17" stroke="#3a78d8"/><circle cx="5.5" cy="9.5" r="2.5" fill="#f0a830"/><path d="M2.5 17c0-3 6-3 6 0v1h-6z" fill="#4a70c8"/><path d="M12 8h10M12 11h10M12 14h10M12 17h10" stroke="#4a90e8" stroke-width="1.2"/><path d="M4 24L22 6" stroke="#5a78b0" stroke-width="4.5"/><path d="M4.5 23.5L21.5 6.5" stroke="#a8c4f0" stroke-width="2"/><circle cx="22" cy="5.5" r="2.8" fill="#d86020"/></symbol><symbol id="ni_resdel" viewBox="0 0 26 26"><rect x="1.5" y="2.5" width="22" height="18" fill="#fff" stroke="#3a78d8" stroke-width="1.3"/><path d="M2 3.5H23" stroke="#5a90e8" stroke-width="2"/><path d="M9.5 3v17" stroke="#3a78d8"/><circle cx="5.5" cy="9.5" r="2.5" fill="#f0a830"/><path d="M2.5 17c0-3 6-3 6 0v1h-6z" fill="#4a70c8"/><path d="M12 8h10M12 11h10M12 14h10M12 17h10" stroke="#4a90e8" stroke-width="1.2"/><path d="M14 14l9 9M23 14l-9 9" stroke="#d86020" stroke-width="3"/></symbol><symbol id="ni_sendlist" viewBox="0 0 26 26"><path d="M1.5 15.5l4-5h15l4 5v8h-23z" fill="#f4b860" stroke="#d07818"/><path d="M1.5 15.5h7l1 2h7l1-2h7" stroke="#c86810" fill="none"/><rect x="7" y="7" width="12" height="8" fill="#fff" stroke="#a0a8c0"/><path d="M13 1l-4 5h2.5v5h3V6H17z" fill="#4a80e0" stroke="#2050b0" stroke-width=".8"/></symbol><symbol id="ni_outdent" viewBox="0 0 26 26"><path d="M1.5 6.5V4.5h7l1.5 1.5H24.5V23.5H2.5Z" fill="url(#gFolderW)" stroke="#4a78c8"/><path d="M2 7H24.5" stroke="#5a90e0" stroke-width="2.5"/><path d="M3 23.5H24.5V8" stroke="#3c5ea8" stroke-width="1" fill="none"/><path d="M6 15l5-5v3h5v4h-5v3z" fill="#90b4f0" stroke="#3a68c0"/></symbol></defs></svg>
<div style="left:0px;top:0px;width:1280px;height:26px;background:linear-gradient(#3c92f8 0 2px,#0066ff 2px 4px,#0058e6 4px 15px,#0060f2 15px 17px,#0068ff 17px 24px,#0040d8 24px 26px)"></div><div style="left:0px;top:3px;width:1px;height:23px;background:#0831d9"></div><div style="left:1279px;top:3px;width:1px;height:23px;background:#0831d9"></div><svg class="ic" style="left:3px;top:4px;" width="16" height="16"><use href="#appicon" width="16" height="16"/></svg><div class="t" style="left:22px;top:5px;font:bold 13px/16px 'Liberation Sans',sans-serif;color:#fff;text-shadow:1px 1px 0 #0a1e8c">VIP Team To Do List [C:\cop_def.vpdb]</div><div style="left:1211px;top:2px;width:21px;height:21px;background:radial-gradient(circle at 30% 30%,#7fb0ff,#3c7df5 55%,#2a62e0);border:1px solid #fff;border-radius:3px"></div><div style="left:1234px;top:2px;width:21px;height:21px;background:radial-gradient(circle at 30% 30%,#7fb0ff,#3c7df5 55%,#2a62e0);border:1px solid #fff;border-radius:3px"></div><div style="left:1257px;top:2px;width:21px;height:21px;background:radial-gradient(circle at 30% 30%,#f0a070,#e05a1c 60%,#c94a10);border:1px solid #fff;border-radius:3px"></div><div style="left:1216px;top:14px;width:8px;height:3px;background:#fff"></div><div style="left:1239px;top:10px;width:9px;height:8px;border:2px solid #fff;border-top-width:3px"></div><div style="left:1243px;top:6px;width:8px;height:7px;border:1px solid #fff;border-top-width:2px;border-left:none;border-bottom:none"></div><svg style="left:1262px;top:7px" width="11" height="11"><path d="M1 1L10 10M10 1L1 10" stroke="#fff" stroke-width="2.2"/></svg><div style="left:0px;top:26px;width:1280px;height:22px;background:linear-gradient(90deg,#f5f4f0 0%,#f2f1ea 40%,#ece9d8 75%,#ece9d8 100%)"></div><div style="left:0px;top:26px;width:1280px;height:1px;background:#fffbf0"></div><div style="left:0px;top:48px;width:1280px;height:1px;background:#b5b2a2"></div><div style="left:0px;top:49px;width:1280px;height:1px;background:#fff"></div><div style="left:4px;top:31px;width:2px;height:2px;background:#a8a594;box-shadow:1px 1px 0 #fff"></div><div style="left:4px;top:35px;width:2px;height:2px;background:#a8a594;box-shadow:1px 1px 0 #fff"></div><div style="left:4px;top:39px;width:2px;height:2px;background:#a8a594;box-shadow:1px 1px 0 #fff"></div><div style="left:4px;top:43px;width:2px;height:2px;background:#a8a594;box-shadow:1px 1px 0 #fff"></div><div class="t" style="left:14px;top:32px;">File</div><div class="t" style="left:41px;top:32px;">View</div><div class="t" style="left:73px;top:32px;">Tasks</div><div class="t" style="left:109px;top:32px;">Categories</div><div class="t" style="left:171px;top:32px;">Resources</div><div class="t" style="left:231px;top:32px;">Tools</div><div class="t" style="left:265px;top:32px;">Help</div><svg style="left:1270px;top:40px" width="6" height="4"><path d="M0 0H6L3 3.5Z" fill="#000"/></svg><div style="left:0px;top:50px;width:1280px;height:34px;background:linear-gradient(90deg,#f4f3ee 0%,#f1f0e9 45%,#ece9d8 78%,#ece9d8 100%)"></div><div style="left:0px;top:84px;width:1280px;height:1px;background:#c5c2b2"></div><div style="left:0px;top:85px;width:1280px;height:1px;background:#fff"></div><div style="left:0px;top:86px;width:1280px;height:35px;background:linear-gradient(90deg,#f4f3ee 0%,#f0efe8 30%,#ece9d8 60%,#ece9d8 100%)"></div><div style="left:5px;top:57px;width:2px;height:2px;background:#a8a594;box-shadow:1px 1px 0 #fff"></div><div style="left:5px;top:61px;width:2px;height:2px;background:#a8a594;box-shadow:1px 1px 0 #fff"></div><div style="left:5px;top:65px;width:2px;height:2px;background:#a8a594;box-shadow:1px 1px 0 #fff"></div><div style="left:5px;top:69px;width:2px;height:2px;background:#a8a594;box-shadow:1px 1px 0 #fff"></div><div style="left:5px;top:73px;width:2px;height:2px;background:#a8a594;box-shadow:1px 1px 0 #fff"></div><div style="left:5px;top:77px;width:2px;height:2px;background:#a8a594;box-shadow:1px 1px 0 #fff"></div><div style="left:5px;top:93px;width:2px;height:2px;background:#a8a594;box-shadow:1px 1px 0 #fff"></div><div style="left:5px;top:97px;width:2px;height:2px;background:#a8a594;box-shadow:1px 1px 0 #fff"></div><div style="left:5px;top:101px;width:2px;height:2px;background:#a8a594;box-shadow:1px 1px 0 #fff"></div><div style="left:5px;top:105px;width:2px;height:2px;background:#a8a594;box-shadow:1px 1px 0 #fff"></div><div style="left:5px;top:109px;width:2px;height:2px;background:#a8a594;box-shadow:1px 1px 0 #fff"></div><div style="left:5px;top:113px;width:2px;height:2px;background:#a8a594;box-shadow:1px 1px 0 #fff"></div><div style="left:542px;top:51px;width:32px;height:32px;background:#fcfcfb;border:1px solid #8aa2c8;border-radius:3px"></div><svg class="ic" style="left:14px;top:54px;" width="26" height="26"><use href="#tb_newdb" width="26" height="26"/></svg><svg class="ic" style="left:47px;top:54px;" width="26" height="26"><use href="#tb_opendb" width="26" height="26"/></svg><svg class="ic" style="left:101px;top:54px;" width="26" height="26"><use href="#tb_savedb" width="26" height="26"/></svg><svg class="ic" style="left:144px;top:54px;" width="26" height="26"><use href="#tb_print" width="26" height="26"/></svg><svg class="ic" style="left:177px;top:54px;" width="26" height="26"><use href="#tb_preview" width="26" height="26"/></svg><svg class="ic" style="left:230px;top:54px;" width="26" height="26"><use href="#tb_createtask" width="26" height="26"/></svg><svg class="ic" style="left:262px;top:54px;" width="26" height="26"><use href="#tb_edittask" width="26" height="26"/></svg><svg class="ic" style="left:293px;top:54px;" width="26" height="26"><use href="#tb_deltask" width="26" height="26"/></svg><svg class="ic" style="left:331px;top:54px;" width="26" height="26"><use href="#tb_binoc" width="26" height="26"/></svg><svg class="ic" style="left:372px;top:54px;" width="26" height="26"><use href="#tb_down" width="26" height="26"/></svg><svg class="ic" style="left:404px;top:54px;" width="26" height="26"><use href="#tb_up" width="26" height="26"/></svg><svg class="ic" style="left:443px;top:54px;" width="26" height="26"><use href="#tb_ddown" width="26" height="26"/></svg><svg class="ic" style="left:475px;top:54px;" width="26" height="26"><use href="#tb_dup" width="26" height="26"/></svg><svg class="ic" style="left:507px;top:54px;" width="26" height="26"><use href="#tb_mail" width="26" height="26"/></svg><svg class="ic" style="left:545px;top:54px;" width="26" height="26"><use href="#tb_notebook" width="26" height="26"/></svg><svg class="ic" style="left:602px;top:54px;" width="26" height="26"><use href="#tb_newcat" width="26" height="26"/></svg><svg class="ic" style="left:632px;top:54px;" width="26" height="26"><use href="#tb_subcat" width="26" height="26"/></svg><svg class="ic" style="left:665px;top:54px;" width="26" height="26"><use href="#tb_editcat" width="26" height="26"/></svg><svg class="ic" style="left:697px;top:54px;" width="26" height="26"><use href="#tb_delcat" width="26" height="26"/></svg><svg class="ic" style="left:737px;top:54px;" width="26" height="26"><use href="#tb_catleft" width="26" height="26"/></svg><svg class="ic" style="left:769px;top:54px;" width="26" height="26"><use href="#tb_catright" width="26" height="26"/></svg><svg class="ic" style="left:808px;top:54px;" width="26" height="26"><use href="#tb_catup" width="26" height="26"/></svg><svg class="ic" style="left:840px;top:54px;" width="26" height="26"><use href="#tb_catdown" width="26" height="26"/></svg><svg class="ic" style="left:870px;top:54px;" width="26" height="26"><use href="#tb_sort" width="26" height="26"/></svg><svg class="ic" style="left:1078px;top:54px;" width="26" height="26"><use href="#tb_savelayout" width="26" height="26"/></svg><svg class="ic" style="left:1112px;top:54px;" width="26" height="26"><use href="#tb_xdis" width="26" height="26"/></svg><div style="left:135px;top:53px;width:1px;height:29px;background:#c5c2b2;box-shadow:1px 0 0 #fff"></div><div style="left:364px;top:53px;width:1px;height:29px;background:#c5c2b2;box-shadow:1px 0 0 #fff"></div><div style="left:435px;top:53px;width:1px;height:29px;background:#c5c2b2;box-shadow:1px 0 0 #fff"></div><div style="left:538px;top:53px;width:1px;height:29px;background:#c5c2b2;box-shadow:1px 0 0 #fff"></div><div style="left:728px;top:53px;width:1px;height:29px;background:#c5c2b2;box-shadow:1px 0 0 #fff"></div><div style="left:799px;top:53px;width:1px;height:29px;background:#c5c2b2;box-shadow:1px 0 0 #fff"></div><div style="left:221px;top:57px;width:2px;height:2px;background:#a8a594;box-shadow:1px 1px 0 #fff"></div><div style="left:221px;top:61px;width:2px;height:2px;background:#a8a594;box-shadow:1px 1px 0 #fff"></div><div style="left:221px;top:65px;width:2px;height:2px;background:#a8a594;box-shadow:1px 1px 0 #fff"></div><div style="left:221px;top:69px;width:2px;height:2px;background:#a8a594;box-shadow:1px 1px 0 #fff"></div><div style="left:221px;top:73px;width:2px;height:2px;background:#a8a594;box-shadow:1px 1px 0 #fff"></div><div style="left:221px;top:77px;width:2px;height:2px;background:#a8a594;box-shadow:1px 1px 0 #fff"></div><div style="left:591px;top:57px;width:2px;height:2px;background:#a8a594;box-shadow:1px 1px 0 #fff"></div><div style="left:591px;top:61px;width:2px;height:2px;background:#a8a594;box-shadow:1px 1px 0 #fff"></div><div style="left:591px;top:65px;width:2px;height:2px;background:#a8a594;box-shadow:1px 1px 0 #fff"></div><div style="left:591px;top:69px;width:2px;height:2px;background:#a8a594;box-shadow:1px 1px 0 #fff"></div><div style="left:591px;top:73px;width:2px;height:2px;background:#a8a594;box-shadow:1px 1px 0 #fff"></div><div style="left:591px;top:77px;width:2px;height:2px;background:#a8a594;box-shadow:1px 1px 0 #fff"></div><div style="left:917px;top:57px;width:2px;height:2px;background:#a8a594;box-shadow:1px 1px 0 #fff"></div><div style="left:917px;top:61px;width:2px;height:2px;background:#a8a594;box-shadow:1px 1px 0 #fff"></div><div style="left:917px;top:65px;width:2px;height:2px;background:#a8a594;box-shadow:1px 1px 0 #fff"></div><div style="left:917px;top:69px;width:2px;height:2px;background:#a8a594;box-shadow:1px 1px 0 #fff"></div><div style="left:917px;top:73px;width:2px;height:2px;background:#a8a594;box-shadow:1px 1px 0 #fff"></div><div style="left:917px;top:77px;width:2px;height:2px;background:#a8a594;box-shadow:1px 1px 0 #fff"></div><svg style="left:83px;top:75px" width="6" height="4"><path d="M0 0H6L3 3.5Z" fill="#000"/></svg><svg style="left:206px;top:75px" width="6" height="4"><path d="M0 0H6L3 3.5Z" fill="#000"/></svg><svg style="left:576px;top:75px" width="6" height="4"><path d="M0 0H6L3 3.5Z" fill="#000"/></svg><svg style="left:902px;top:75px" width="6" height="4"><path d="M0 0H6L3 3.5Z" fill="#000"/></svg><svg style="left:1142px;top:75px" width="6" height="4"><path d="M0 0H6L3 3.5Z" fill="#000"/></svg><div style="left:922px;top:57px;width:152px;height:20px;background:#fff;border:1px solid #fff"></div><div class="t" style="left:924px;top:61px;">Default Task View Layout</div><div style="left:1060px;top:58px;width:14px;height:18px;background:linear-gradient(#d5e2fb,#b4cbf5);border-radius:2px"></div><svg style="left:1063px;top:64px" width="9" height="6"><path d="M1 1L4.5 4.5L8 1" stroke="#4d6185" stroke-width="2" fill="none"/></svg><svg class="ic" style="left:14px;top:90px;" width="26" height="26"><use href="#tb_clip" width="26" height="26"/></svg><svg class="ic" style="left:45px;top:90px;" width="26" height="26"><use href="#tb_res" width="26" height="26"/></svg><svg class="ic" style="left:115px;top:90px;" width="26" height="26"><use href="#tb_resadd" width="26" height="26"/></svg><svg class="ic" style="left:147px;top:90px;" width="26" height="26"><use href="#tb_resedit" width="26" height="26"/></svg><svg class="ic" style="left:179px;top:90px;" width="26" height="26"><use href="#tb_resdel" width="26" height="26"/></svg><svg class="ic" style="left:212px;top:90px;" width="26" height="26"><use href="#tb_send" width="26" height="26"/></svg><svg class="ic" style="left:244px;top:90px;" width="26" height="26"><use href="#tb_rescomp" width="26" height="26"/></svg><div style="left:108px;top:93px;width:2px;height:2px;background:#a8a594;box-shadow:1px 1px 0 #fff"></div><div style="left:108px;top:97px;width:2px;height:2px;background:#a8a594;box-shadow:1px 1px 0 #fff"></div><div style="left:108px;top:101px;width:2px;height:2px;background:#a8a594;box-shadow:1px 1px 0 #fff"></div><div style="left:108px;top:105px;width:2px;height:2px;background:#a8a594;box-shadow:1px 1px 0 #fff"></div><div style="left:108px;top:109px;width:2px;height:2px;background:#a8a594;box-shadow:1px 1px 0 #fff"></div><div style="left:108px;top:113px;width:2px;height:2px;background:#a8a594;box-shadow:1px 1px 0 #fff"></div><svg style="left:77px;top:111px" width="6" height="4"><path d="M0 0H6L3 3.5Z" fill="#000"/></svg><svg style="left:276px;top:111px" width="6" height="4"><path d="M0 0H6L3 3.5Z" fill="#000"/></svg><div style="left:0px;top:121px;width:1px;height:882px;background:#d0cdbe"></div><div style="left:1px;top:121px;width:1px;height:882px;background:#fdfbf2"></div><div style="left:2px;top:123px;width:181px;height:22px;background:linear-gradient(#fbfbf8,#efeee7);border:1px solid #d2cfc0;border-radius:4px"></div><div class="t" style="left:6px;top:128px;">Navigation Bar</div><svg class="ic" style="left:151px;top:127px;" width="12" height="13"><use href="#hb_pin" width="12" height="13"/></svg><svg class="ic" style="left:166px;top:128px;" width="13" height="13"><use href="#hb_close" width="13" height="13"/></svg><div style="left:2px;top:147px;width:181px;height:855px;background:linear-gradient(#80a0e2 0,#7f9fe2 320px,#6b8bdb 630px,#6a8adb 100%)"></div><div style="left:12px;top:151px;width:161px;height:25px;background:linear-gradient(90deg,#fff 0,#fff 79px,#dfe6f8 128px,#c8d5f7 161px);border-radius:3px 3px 0 0"></div><div style="left:12px;top:176px;width:161px;height:125px;background:#d6dff7;border:1px solid #fff;border-top:none"></div><svg class="ic" style="left:12px;top:152px;" width="26" height="24"><use href="#ng_general" width="26" height="24"/></svg><div class="t" style="left:40px;top:157px;font:bold 12px/15px 'Liberation Sans',sans-serif;color:#215dc6">General</div><div style="left:151px;top:154px;width:17px;height:17px;background:radial-gradient(circle at 40% 35%,#fff 50%,#e6ebf6 100%);border:1px solid #c8ccd8;border-radius:50%;box-shadow:0 1px 1px rgba(120,140,190,.5)"></div><svg style="left:155px;top:158px" width="9" height="9"><path d="M1 4.5L4.5 1L8 4.5M1 8.5L4.5 5L8 8.5" stroke="#2349b5" stroke-width="1.6" fill="none"/></svg><svg class="ic" style="left:13px;top:185px;" width="20" height="20"><use href="#ni_newdb" width="20" height="20"/></svg><div class="t" style="left:35px;top:189px;color:#215dc6">New Database ...</div><svg class="ic" style="left:13px;top:207px;" width="20" height="20"><use href="#ni_opendb" width="20" height="20"/></svg><div class="t" style="left:35px;top:211px;color:#215dc6">Open Database ...</div><svg class="ic" style="left:13px;top:229px;" width="20" height="20"><use href="#ni_savedb" width="20" height="20"/></svg><div class="t" style="left:35px;top:233px;color:#215dc6">Save Database</div><svg class="ic" style="left:15px;top:252px;" width="17" height="17"><use href="#ni_print" width="17" height="17"/></svg><div class="t" style="left:35px;top:255px;color:#215dc6">Print</div><svg class="ic" style="left:15px;top:274px;" width="17" height="17"><use href="#ni_preview" width="17" height="17"/></svg><div class="t" style="left:35px;top:277px;color:#215dc6">Print Preview</div><div style="left:12px;top:306px;width:161px;height:25px;background:linear-gradient(90deg,#fff 0,#fff 79px,#dfe6f8 128px,#c8d5f7 161px);border-radius:3px 3px 0 0"></div><div style="left:12px;top:331px;width:161px;height:191px;background:#d6dff7;border:1px solid #fff;border-top:none"></div><svg class="ic" style="left:12px;top:307px;" width="26" height="24"><use href="#ng_task" width="26" height="24"/></svg><div class="t" style="left:40px;top:312px;font:bold 12px/15px 'Liberation Sans',sans-serif;color:#215dc6">Task Operations</div><div style="left:151px;top:309px;width:17px;height:17px;background:radial-gradient(circle at 40% 35%,#fff 50%,#e6ebf6 100%);border:1px solid #c8ccd8;border-radius:50%;box-shadow:0 1px 1px rgba(120,140,190,.5)"></div><svg style="left:155px;top:313px" width="9" height="9"><path d="M1 4.5L4.5 1L8 4.5M1 8.5L4.5 5L8 8.5" stroke="#2349b5" stroke-width="1.6" fill="none"/></svg><svg class="ic" style="left:15px;top:341px;" width="17" height="17"><use href="#ni_createtask" width="17" height="17"/></svg><div class="t" style="left:35px;top:344px;color:#215dc6">Create Task</div><svg class="ic" style="left:15px;top:363px;" width="17" height="17"><use href="#ni_edittask" width="17" height="17"/></svg><div class="t" style="left:35px;top:366px;color:#215dc6">Edit Task</div><svg class="ic" style="left:15px;top:385px;" width="17" height="17"><use href="#ni_deltask" width="17" height="17"/></svg><div class="t" style="left:35px;top:388px;color:#215dc6">Delete Task(s)</div><svg class="ic" style="left:16px;top:408px;" width="16" height="16"><use href="#ni_up" width="16" height="16"/></svg><div class="t" style="left:35px;top:410px;color:#215dc6">Task Move Up</div><svg class="ic" style="left:16px;top:430px;" width="16" height="16"><use href="#ni_down" width="16" height="16"/></svg><div class="t" style="left:35px;top:432px;color:#215dc6">Task Move Down</div><svg class="ic" style="left:16px;top:452px;" width="16" height="16"><use href="#ni_dup" width="16" height="16"/></svg><div class="t" style="left:35px;top:454px;color:#215dc6">Increase Priority</div><svg class="ic" style="left:16px;top:474px;" width="16" height="16"><use href="#ni_ddown" width="16" height="16"/></svg><div class="t" style="left:35px;top:476px;color:#215dc6">Decrease Priority</div><svg class="ic" style="left:15px;top:495px;" width="17" height="17"><use href="#ni_send" width="17" height="17"/></svg><div class="t" style="left:35px;top:498px;color:#215dc6">Send task to assigned res...</div><div style="left:12px;top:527px;width:161px;height:25px;background:linear-gradient(90deg,#fff 0,#fff 79px,#dfe6f8 128px,#c8d5f7 161px);border-radius:3px 3px 0 0"></div><div style="left:12px;top:552px;width:161px;height:235px;background:#d6dff7;border:1px solid #fff;border-top:none"></div><svg class="ic" style="left:12px;top:528px;" width="26" height="24"><use href="#ng_cat" width="26" height="24"/></svg><div class="t" style="left:40px;top:533px;font:bold 12px/15px 'Liberation Sans',sans-serif;color:#215dc6">Category Operati...</div><div style="left:151px;top:530px;width:17px;height:17px;background:radial-gradient(circle at 40% 35%,#fff 50%,#e6ebf6 100%);border:1px solid #c8ccd8;border-radius:50%;box-shadow:0 1px 1px rgba(120,140,190,.5)"></div><svg style="left:155px;top:534px" width="9" height="9"><path d="M1 4.5L4.5 1L8 4.5M1 8.5L4.5 5L8 8.5" stroke="#2349b5" stroke-width="1.6" fill="none"/></svg><svg class="ic" style="left:15px;top:562px;" width="17" height="17"><use href="#ni_newcat" width="17" height="17"/></svg><div class="t" style="left:35px;top:565px;color:#215dc6">New Category</div><svg class="ic" style="left:15px;top:584px;" width="17" height="17"><use href="#ni_subcat" width="17" height="17"/></svg><div class="t" style="left:35px;top:587px;color:#215dc6">Add Sub Category</div><svg class="ic" style="left:15px;top:606px;" width="17" height="17"><use href="#ni_editcat" width="17" height="17"/></svg><div class="t" style="left:35px;top:609px;color:#215dc6">Edit Category</div><svg class="ic" style="left:15px;top:628px;" width="17" height="17"><use href="#ni_delcat" width="17" height="17"/></svg><div class="t" style="left:35px;top:631px;color:#215dc6">Delete Category</div><svg class="ic" style="left:15px;top:650px;" width="17" height="17"><use href="#ni_catup" width="17" height="17"/></svg><div class="t" style="left:35px;top:653px;color:#215dc6">Category Move Up</div><svg class="ic" style="left:15px;top:672px;" width="17" height="17"><use href="#ni_catdown" width="17" height="17"/></svg><div class="t" style="left:35px;top:675px;color:#215dc6">Category Move Down</div><svg class="ic" style="left:15px;top:694px;" width="17" height="17"><use href="#ni_sort" width="17" height="17"/></svg><div class="t" style="left:35px;top:697px;color:#215dc6">Sort Categories</div><svg class="ic" style="left:15px;top:716px;" width="17" height="17"><use href="#ni_outdent" width="17" height="17"/></svg><div class="t" style="left:35px;top:719px;color:#5f86d6">Category Outdent</div><svg class="ic" style="left:15px;top:738px;" width="17" height="17"><use href="#ni_indent" width="17" height="17"/></svg><div class="t" style="left:35px;top:741px;color:#215dc6">Category Indent</div><div class="t" style="left:35px;top:763px;color:#215dc6">Set Filter by 'Deliver'</div><div style="left:12px;top:792px;width:161px;height:25px;background:linear-gradient(90deg,#fff 0,#fff 79px,#dfe6f8 128px,#c8d5f7 161px);border-radius:3px 3px 0 0"></div><div style="left:12px;top:817px;width:161px;height:103px;background:#d6dff7;border:1px solid #fff;border-top:none"></div><svg class="ic" style="left:12px;top:793px;" width="26" height="24"><use href="#ng_res" width="26" height="24"/></svg><div class="t" style="left:40px;top:798px;font:bold 12px/15px 'Liberation Sans',sans-serif;color:#215dc6">Resource Operati...</div><div style="left:151px;top:795px;width:17px;height:17px;background:radial-gradient(circle at 40% 35%,#fff 50%,#e6ebf6 100%);border:1px solid #c8ccd8;border-radius:50%;box-shadow:0 1px 1px rgba(120,140,190,.5)"></div><svg style="left:155px;top:799px" width="9" height="9"><path d="M1 4.5L4.5 1L8 4.5M1 8.5L4.5 5L8 8.5" stroke="#2349b5" stroke-width="1.6" fill="none"/></svg><svg class="ic" style="left:15px;top:827px;" width="17" height="17"><use href="#ni_resadd" width="17" height="17"/></svg><div class="t" style="left:35px;top:830px;color:#5f86d6">New Resource</div><svg class="ic" style="left:15px;top:849px;" width="17" height="17"><use href="#ni_resedit" width="17" height="17"/></svg><div class="t" style="left:35px;top:852px;color:#5f86d6">Edit Resource</div><svg class="ic" style="left:15px;top:871px;" width="17" height="17"><use href="#ni_resdel" width="17" height="17"/></svg><div class="t" style="left:35px;top:874px;color:#5f86d6">Delete Resource</div><svg class="ic" style="left:15px;top:893px;" width="17" height="17"><use href="#ni_sendlist" width="17" height="17"/></svg><div class="t" style="left:35px;top:896px;color:#5f86d6">Send To Do List</div><div style="left:185px;top:122px;width:923px;height:854px;border:1px solid #7f9db9;background:#ece9d8"></div><div style="left:186px;top:123px;width:921px;height:24px;background:#ece9d8"></div><div style="left:186px;top:146px;width:921px;height:3px;background:#fff"></div><div style="left:249px;top:127px;width:65px;height:20px;background:linear-gradient(#fefefe,#ecebe5);border:1px solid #919b9c;border-bottom:none;border-radius:3px 3px 0 0"></div><div class="t" style="left:256px;top:132px;">Resources</div><div style="left:187px;top:125px;width:62px;height:22px;background:#fff;border:1px solid #919b9c;border-bottom:none;border-radius:3px 3px 0 0"></div><div style="left:187px;top:125px;width:62px;height:2px;background:#e68b2c;border-radius:3px 3px 0 0"></div><div style="left:188px;top:127px;width:60px;height:1px;background:#ffc73c"></div><div class="t" style="left:197px;top:129px;">Tasks list</div><div style="left:186px;top:149px;width:904px;height:35px;background:#aca899"></div><div style="left:192px;top:157px;width:66px;height:19px;background:#ebeadb;border-bottom:1px solid #c8c5b5"></div><div class="t" style="left:196px;top:161px;">Category</div><svg style="left:243px;top:162px" width="10" height="9"><path d="M5 1L9 8H1Z" stroke="#aca899" fill="none"/></svg><div style="left:256px;top:159px;width:1px;height:15px;background:#c8c5b5"></div><div style="left:186px;top:184px;width:904px;height:18px;background:linear-gradient(#ebeadb 0,#ebeadb 15px,#e4e1d1 16px,#d8d5c4 18px)"></div><div style="left:186px;top:202px;width:904px;height:1px;background:repeating-linear-gradient(90deg,#bdbaa8 0 1px,#ebeadb 1px 2px)"></div><div style="left:233px;top:187px;width:1px;height:13px;background:#c5c2b2;box-shadow:1px 0 0 #fff"></div><div style="left:371px;top:187px;width:1px;height:13px;background:#c5c2b2;box-shadow:1px 0 0 #fff"></div><div style="left:952px;top:187px;width:1px;height:13px;background:#c5c2b2;box-shadow:1px 0 0 #fff"></div><div style="left:810px;top:187px;width:1px;height:13px;background:#c5c2b2;box-shadow:1px 0 0 #fff"></div><div style="left:1088px;top:187px;width:1px;height:13px;background:#fff"></div><div class="t" style="left:198px;top:188px;">Done</div><svg class="ic" style="left:237px;top:186px;" width="17" height="17"><use href="#hd_info" width="17" height="17"/></svg><div class="t" style="left:303px;top:188px;">Info</div><div class="t" style="left:569px;top:188px;">Name</div><div class="t" style="left:861px;top:188px;">Complete</div><div class="t" style="left:998px;top:188px;">Status</div><div style="left:795px;top:187px;width:15px;height:14px;background:#fff"></div><div style="left:796px;top:188px;width:13px;height:12px;background:linear-gradient(#d3e0fa,#b2c8f3);border-radius:2px"></div><svg style="left:798px;top:191px" width="9" height="6"><path d="M1 1L4.5 4.5L8 1" stroke="#4d6185" stroke-width="2" fill="none"/></svg><div style="left:1072px;top:187px;width:15px;height:14px;background:#fff"></div><div style="left:1073px;top:188px;width:13px;height:12px;background:linear-gradient(#d3e0fa,#b2c8f3);border-radius:2px"></div><svg style="left:1075px;top:191px" width="9" height="6"><path d="M1 1L4.5 4.5L8 1" stroke="#4d6185" stroke-width="2" fill="none"/></svg><div style="left:186px;top:203px;width:904px;height:772px;background:#fff"></div><div style="left:186px;top:203px;width:14px;height:22px;background:#ece9d8"></div><div style="left:200px;top:224px;width:889px;height:1px;background:#aca899"></div><div style="left:200px;top:203px;width:1px;height:22px;background:#aca899"></div><div style="left:233px;top:203px;width:1px;height:22px;background:#aca899"></div><div style="left:371px;top:203px;width:1px;height:22px;background:#aca899"></div><div style="left:812px;top:203px;width:1px;height:22px;background:#aca899"></div><div style="left:953px;top:203px;width:1px;height:22px;background:#aca899"></div><div style="left:1089px;top:203px;width:1px;height:22px;background:#aca899"></div><div style="left:210px;top:207px;width:13px;height:13px;background:linear-gradient(135deg,#dcdcd6 0%,#f4f4f0 60%,#fff 100%);border:1px solid #1c5180"></div><div class="t" style="left:374px;top:206px;color:#000;letter-spacing:-0.17px">Make sure you know what your graphics production capability is</div><div class="t" style="left:813px;top:207px;width:140px;text-align:center;color:#000;">0 %</div><svg class="ic" style="left:957px;top:205px;" width="16" height="16"><use href="#gs_open" width="16" height="16"/></svg><div class="t" style="left:978px;top:207px;color:#000;">Open</div><div style="left:186px;top:225px;width:14px;height:22px;background:#ece9d8"></div><div style="left:200px;top:246px;width:889px;height:1px;background:#aca899"></div><div style="left:200px;top:225px;width:1px;height:22px;background:#aca899"></div><div style="left:233px;top:225px;width:1px;height:22px;background:#aca899"></div><div style="left:371px;top:225px;width:1px;height:22px;background:#aca899"></div><div style="left:812px;top:225px;width:1px;height:22px;background:#aca899"></div><div style="left:953px;top:225px;width:1px;height:22px;background:#aca899"></div><div style="left:1089px;top:225px;width:1px;height:22px;background:#aca899"></div><div style="left:210px;top:229px;width:13px;height:13px;background:linear-gradient(135deg,#dcdcd6 0%,#f4f4f0 60%,#fff 100%);border:1px solid #1c5180"></div><div class="t" style="left:374px;top:228px;color:#000;letter-spacing:-0.17px">Make a test run to ensure graphics quality and capability</div><div style="left:815px;top:227px;width:81px;height:17px;background:linear-gradient(#9be89b 0px,#8ee38e 2px,#5ed85e 3px,#2ed12e 4px,#2ed12e 13px,#6ee26e 14px,#6ee26e 17px)"></div><div class="t" style="left:813px;top:229px;width:140px;text-align:center;color:#000;">60 %</div><div style="left:815px;top:229px;width:81px;height:14px;overflow:hidden"><div class="t" style="left:-2px;top:0;width:140px;text-align:center;color:#e030e0;">60 %</div></div><svg class="ic" style="left:957px;top:227px;" width="16" height="16"><use href="#gs_open" width="16" height="16"/></svg><div class="t" style="left:978px;top:229px;color:#000;">Open</div><div style="left:186px;top:247px;width:903px;height:17px;background:#ece9d8"></div><div style="left:186px;top:264px;width:903px;height:1px;background:#aca899"></div><div style="left:1089px;top:247px;width:1px;height:18px;background:#aca899"></div><div style="left:189px;top:250px;width:9px;height:9px;background:linear-gradient(#fff,#dcdad0);border:1px solid #7d93b6;border-radius:2px"></div><div style="left:191px;top:254px;width:5px;height:1px;background:#000"></div><div class="t" style="left:203px;top:250px;">Category : Plan</div><div style="left:186px;top:265px;width:14px;height:22px;background:#ece9d8"></div><div style="left:200px;top:286px;width:889px;height:1px;background:#aca899"></div><div style="left:200px;top:265px;width:1px;height:22px;background:#aca899"></div><div style="left:233px;top:265px;width:1px;height:22px;background:#aca899"></div><div style="left:371px;top:265px;width:1px;height:22px;background:#aca899"></div><div style="left:812px;top:265px;width:1px;height:22px;background:#aca899"></div><div style="left:953px;top:265px;width:1px;height:22px;background:#aca899"></div><div style="left:1089px;top:265px;width:1px;height:22px;background:#aca899"></div><div style="left:210px;top:269px;width:13px;height:13px;background:linear-gradient(135deg,#dcdcd6 0%,#f4f4f0 60%,#fff 100%);border:1px solid #1c5180"></div><div class="t" style="left:374px;top:268px;color:#000;letter-spacing:-0.17px">Determine requirements, guidelines, dictates, standard procedures</div><div class="t" style="left:813px;top:269px;width:140px;text-align:center;color:#000;">0 %</div><svg class="ic" style="left:959px;top:267px;" width="16" height="16"><use href="#gs_created" width="16" height="16"/></svg><div class="t" style="left:978px;top:269px;color:#000;">Created</div><div style="left:186px;top:287px;width:14px;height:22px;background:#ece9d8"></div><div style="left:200px;top:308px;width:889px;height:1px;background:#aca899"></div><div style="left:200px;top:287px;width:1px;height:22px;background:#aca899"></div><div style="left:233px;top:287px;width:1px;height:22px;background:#aca899"></div><div style="left:371px;top:287px;width:1px;height:22px;background:#aca899"></div><div style="left:812px;top:287px;width:1px;height:22px;background:#aca899"></div><div style="left:953px;top:287px;width:1px;height:22px;background:#aca899"></div><div style="left:1089px;top:287px;width:1px;height:22px;background:#aca899"></div><div style="left:210px;top:291px;width:13px;height:13px;background:linear-gradient(135deg,#dcdcd6 0%,#f4f4f0 60%,#fff 100%);border:1px solid #1c5180"></div><div class="t" style="left:374px;top:290px;color:#000;letter-spacing:-0.17px">Find out the 5 W's (who, what, when, where, why)</div><div style="left:815px;top:289px;width:45px;height:17px;background:linear-gradient(#9be89b 0px,#8ee38e 2px,#5ed85e 3px,#2ed12e 4px,#2ed12e 13px,#6ee26e 14px,#6ee26e 17px)"></div><div class="t" style="left:813px;top:291px;width:140px;text-align:center;color:#000;">33 %</div><div style="left:815px;top:291px;width:45px;height:14px;overflow:hidden"><div class="t" style="left:-2px;top:0;width:140px;text-align:center;color:#e030e0;">33 %</div></div><svg class="ic" style="left:957px;top:289px;" width="16" height="16"><use href="#gs_open" width="16" height="16"/></svg><div class="t" style="left:978px;top:291px;color:#000;">Open</div><div style="left:186px;top:309px;width:14px;height:22px;background:#ece9d8"></div><div style="left:200px;top:330px;width:889px;height:1px;background:#aca899"></div><div style="left:200px;top:309px;width:1px;height:22px;background:#aca899"></div><div style="left:233px;top:309px;width:1px;height:22px;background:#aca899"></div><div style="left:371px;top:309px;width:1px;height:22px;background:#aca899"></div><div style="left:812px;top:309px;width:1px;height:22px;background:#aca899"></div><div style="left:953px;top:309px;width:1px;height:22px;background:#aca899"></div><div style="left:1089px;top:309px;width:1px;height:22px;background:#aca899"></div><div style="left:210px;top:313px;width:13px;height:13px;background:linear-gradient(135deg,#dcdcd6 0%,#f4f4f0 60%,#fff 100%);border:1px solid #1c5180"></div><div class="t" style="left:374px;top:312px;color:#000;letter-spacing:-0.17px">Check available expertise that can help you</div><div class="t" style="left:813px;top:313px;width:140px;text-align:center;color:#000;">0 %</div><svg class="ic" style="left:959px;top:311px;" width="16" height="16"><use href="#gs_created" width="16" height="16"/></svg><div class="t" style="left:978px;top:313px;color:#000;">Created</div><div style="left:186px;top:331px;width:14px;height:22px;background:#ece9d8"></div><div style="left:200px;top:352px;width:889px;height:1px;background:#aca899"></div><div style="left:200px;top:331px;width:1px;height:22px;background:#aca899"></div><div style="left:233px;top:331px;width:1px;height:22px;background:#aca899"></div><div style="left:371px;top:331px;width:1px;height:22px;background:#aca899"></div><div style="left:812px;top:331px;width:1px;height:22px;background:#aca899"></div><div style="left:953px;top:331px;width:1px;height:22px;background:#aca899"></div><div style="left:1089px;top:331px;width:1px;height:22px;background:#aca899"></div><div style="left:210px;top:335px;width:13px;height:13px;background:linear-gradient(135deg,#dcdcd6 0%,#f4f4f0 60%,#fff 100%);border:1px solid #1c5180"></div><div class="t" style="left:374px;top:334px;color:#000;letter-spacing:-0.17px">Write out your general objective</div><div class="t" style="left:813px;top:335px;width:140px;text-align:center;color:#000;">0 %</div><svg class="ic" style="left:959px;top:333px;" width="16" height="16"><use href="#gs_created" width="16" height="16"/></svg><div class="t" style="left:978px;top:335px;color:#000;">Created</div><div style="left:186px;top:353px;width:14px;height:22px;background:#ece9d8"></div><div style="left:200px;top:374px;width:889px;height:1px;background:#aca899"></div><div style="left:200px;top:353px;width:1px;height:22px;background:#aca899"></div><div style="left:233px;top:353px;width:1px;height:22px;background:#aca899"></div><div style="left:371px;top:353px;width:1px;height:22px;background:#aca899"></div><div style="left:812px;top:353px;width:1px;height:22px;background:#aca899"></div><div style="left:953px;top:353px;width:1px;height:22px;background:#aca899"></div><div style="left:1089px;top:353px;width:1px;height:22px;background:#aca899"></div><div style="left:210px;top:357px;width:13px;height:13px;background:linear-gradient(135deg,#dcdcd6 0%,#f4f4f0 60%,#fff 100%);border:1px solid #1c5180"></div><div class="t" style="left:374px;top:356px;color:#000;letter-spacing:-0.17px">Write out the specific objective - the end product</div><div class="t" style="left:813px;top:357px;width:140px;text-align:center;color:#000;">0 %</div><svg class="ic" style="left:959px;top:355px;" width="16" height="16"><use href="#gs_created" width="16" height="16"/></svg><div class="t" style="left:978px;top:357px;color:#000;">Created</div><div style="left:186px;top:375px;width:14px;height:22px;background:#ece9d8"></div><div style="left:200px;top:396px;width:889px;height:1px;background:#aca899"></div><div style="left:200px;top:375px;width:1px;height:22px;background:#aca899"></div><div style="left:233px;top:375px;width:1px;height:22px;background:#aca899"></div><div style="left:371px;top:375px;width:1px;height:22px;background:#aca899"></div><div style="left:812px;top:375px;width:1px;height:22px;background:#aca899"></div><div style="left:953px;top:375px;width:1px;height:22px;background:#aca899"></div><div style="left:1089px;top:375px;width:1px;height:22px;background:#aca899"></div><div style="left:210px;top:379px;width:13px;height:13px;background:linear-gradient(135deg,#dcdcd6 0%,#f4f4f0 60%,#fff 100%);border:1px solid #1c5180"></div><div class="t" style="left:374px;top:378px;color:#000;letter-spacing:-0.17px">List factors associated with meeting conditions that might influence presentation</div><div style="left:815px;top:377px;width:73px;height:17px;background:linear-gradient(#9be89b 0px,#8ee38e 2px,#5ed85e 3px,#2ed12e 4px,#2ed12e 13px,#6ee26e 14px,#6ee26e 17px)"></div><div class="t" style="left:813px;top:379px;width:140px;text-align:center;color:#000;">54 %</div><div style="left:815px;top:379px;width:73px;height:14px;overflow:hidden"><div class="t" style="left:-2px;top:0;width:140px;text-align:center;color:#e030e0;">54 %</div></div><svg class="ic" style="left:957px;top:377px;" width="16" height="16"><use href="#gs_open" width="16" height="16"/></svg><div class="t" style="left:978px;top:379px;color:#000;">Open</div><div style="left:186px;top:397px;width:14px;height:22px;background:#ece9d8"></div><div style="left:200px;top:418px;width:889px;height:1px;background:#aca899"></div><div style="left:200px;top:397px;width:1px;height:22px;background:#aca899"></div><div style="left:233px;top:397px;width:1px;height:22px;background:#aca899"></div><div style="left:371px;top:397px;width:1px;height:22px;background:#aca899"></div><div style="left:812px;top:397px;width:1px;height:22px;background:#aca899"></div><div style="left:953px;top:397px;width:1px;height:22px;background:#aca899"></div><div style="left:1089px;top:397px;width:1px;height:22px;background:#aca899"></div><div style="left:210px;top:401px;width:13px;height:13px;background:linear-gradient(135deg,#dcdcd6 0%,#f4f4f0 60%,#fff 100%);border:1px solid #1c5180"></div><div class="t" style="left:374px;top:400px;color:#000;letter-spacing:-0.17px">Identify and assess audience</div><div class="t" style="left:813px;top:401px;width:140px;text-align:center;color:#000;">0 %</div><svg class="ic" style="left:959px;top:399px;" width="16" height="16"><use href="#gs_created" width="16" height="16"/></svg><div class="t" style="left:978px;top:401px;color:#000;">Created</div><div style="left:186px;top:419px;width:903px;height:17px;background:#ece9d8"></div><div style="left:186px;top:436px;width:903px;height:1px;background:#aca899"></div><div style="left:1089px;top:419px;width:1px;height:18px;background:#aca899"></div><div style="left:189px;top:422px;width:9px;height:9px;background:linear-gradient(#fff,#dcdad0);border:1px solid #7d93b6;border-radius:2px"></div><div style="left:191px;top:426px;width:5px;height:1px;background:#000"></div><div class="t" style="left:203px;top:422px;">Category : Stage</div><div style="left:186px;top:437px;width:14px;height:22px;background:#ece9d8"></div><div style="left:200px;top:458px;width:889px;height:1px;background:#aca899"></div><div style="left:200px;top:437px;width:1px;height:22px;background:#aca899"></div><div style="left:233px;top:437px;width:1px;height:22px;background:#aca899"></div><div style="left:371px;top:437px;width:1px;height:22px;background:#aca899"></div><div style="left:812px;top:437px;width:1px;height:22px;background:#aca899"></div><div style="left:953px;top:437px;width:1px;height:22px;background:#aca899"></div><div style="left:1089px;top:437px;width:1px;height:22px;background:#aca899"></div><div style="left:210px;top:441px;width:13px;height:13px;background:linear-gradient(135deg,#dcdcd6 0%,#f4f4f0 60%,#fff 100%);border:1px solid #1c5180"></div><div class="t" style="left:374px;top:440px;color:#000;letter-spacing:-0.17px">Again determine what the requirements call for</div><div class="t" style="left:813px;top:441px;width:140px;text-align:center;color:#000;">0 %</div><svg class="ic" style="left:959px;top:439px;" width="16" height="16"><use href="#gs_created" width="16" height="16"/></svg><div class="t" style="left:978px;top:441px;color:#000;">Created</div><div style="left:186px;top:459px;width:14px;height:22px;background:#ece9d8"></div><div style="left:200px;top:480px;width:889px;height:1px;background:#aca899"></div><div style="left:200px;top:459px;width:1px;height:22px;background:#aca899"></div><div style="left:233px;top:459px;width:1px;height:22px;background:#aca899"></div><div style="left:371px;top:459px;width:1px;height:22px;background:#aca899"></div><div style="left:812px;top:459px;width:1px;height:22px;background:#aca899"></div><div style="left:953px;top:459px;width:1px;height:22px;background:#aca899"></div><div style="left:1089px;top:459px;width:1px;height:22px;background:#aca899"></div><div style="left:210px;top:463px;width:13px;height:13px;background:linear-gradient(135deg,#dcdcd6 0%,#f4f4f0 60%,#fff 100%);border:1px solid #1c5180"></div><div class="t" style="left:374px;top:462px;color:#000;letter-spacing:-0.17px">Check out the meeting facility</div><div class="t" style="left:813px;top:463px;width:140px;text-align:center;color:#000;">0 %</div><svg class="ic" style="left:959px;top:461px;" width="16" height="16"><use href="#gs_created" width="16" height="16"/></svg><div class="t" style="left:978px;top:463px;color:#000;">Created</div><div style="left:186px;top:481px;width:14px;height:22px;background:#ece9d8"></div><div style="left:200px;top:502px;width:889px;height:1px;background:#aca899"></div><div style="left:200px;top:481px;width:1px;height:22px;background:#aca899"></div><div style="left:233px;top:481px;width:1px;height:22px;background:#aca899"></div><div style="left:371px;top:481px;width:1px;height:22px;background:#aca899"></div><div style="left:812px;top:481px;width:1px;height:22px;background:#aca899"></div><div style="left:953px;top:481px;width:1px;height:22px;background:#aca899"></div><div style="left:1089px;top:481px;width:1px;height:22px;background:#aca899"></div><div style="left:210px;top:485px;width:13px;height:13px;background:linear-gradient(135deg,#dcdcd6 0%,#f4f4f0 60%,#fff 100%);border:1px solid #1c5180"></div><div class="t" style="left:374px;top:484px;color:#000;letter-spacing:-0.17px">Identify and list in detail all staging requirements</div><div class="t" style="left:813px;top:485px;width:140px;text-align:center;color:#000;">0 %</div><svg class="ic" style="left:959px;top:483px;" width="16" height="16"><use href="#gs_created" width="16" height="16"/></svg><div class="t" style="left:978px;top:485px;color:#000;">Created</div><div style="left:186px;top:503px;width:14px;height:22px;background:#ece9d8"></div><div style="left:200px;top:524px;width:889px;height:1px;background:#aca899"></div><div style="left:200px;top:503px;width:1px;height:22px;background:#aca899"></div><div style="left:233px;top:503px;width:1px;height:22px;background:#aca899"></div><div style="left:371px;top:503px;width:1px;height:22px;background:#aca899"></div><div style="left:812px;top:503px;width:1px;height:22px;background:#aca899"></div><div style="left:953px;top:503px;width:1px;height:22px;background:#aca899"></div><div style="left:1089px;top:503px;width:1px;height:22px;background:#aca899"></div><div style="left:210px;top:507px;width:13px;height:13px;background:linear-gradient(135deg,#dcdcd6 0%,#f4f4f0 60%,#fff 100%);border:1px solid #1c5180"></div><div class="t" style="left:374px;top:506px;color:#000;letter-spacing:-0.17px">Verify all audio-visual equipment will be available and working</div><div style="left:815px;top:505px;width:117px;height:17px;background:linear-gradient(#9be89b 0px,#8ee38e 2px,#5ed85e 3px,#2ed12e 4px,#2ed12e 13px,#6ee26e 14px,#6ee26e 17px)"></div><div class="t" style="left:813px;top:507px;width:140px;text-align:center;color:#000;">87 %</div><div style="left:815px;top:507px;width:117px;height:14px;overflow:hidden"><div class="t" style="left:-2px;top:0;width:140px;text-align:center;color:#e030e0;">87 %</div></div><svg class="ic" style="left:957px;top:505px;" width="16" height="16"><use href="#gs_open" width="16" height="16"/></svg><div class="t" style="left:978px;top:507px;color:#000;">Open</div><div style="left:186px;top:525px;width:14px;height:22px;background:#ece9d8"></div><div style="left:200px;top:546px;width:889px;height:1px;background:#aca899"></div><div style="left:200px;top:525px;width:1px;height:22px;background:#aca899"></div><div style="left:233px;top:525px;width:1px;height:22px;background:#aca899"></div><div style="left:371px;top:525px;width:1px;height:22px;background:#aca899"></div><div style="left:812px;top:525px;width:1px;height:22px;background:#aca899"></div><div style="left:953px;top:525px;width:1px;height:22px;background:#aca899"></div><div style="left:1089px;top:525px;width:1px;height:22px;background:#aca899"></div><div style="left:210px;top:529px;width:13px;height:13px;background:linear-gradient(135deg,#dcdcd6 0%,#f4f4f0 60%,#fff 100%);border:1px solid #1c5180"></div><svg class="ic" style="left:286px;top:527px;" width="16" height="16"><use href="#gi_recur" width="16" height="16"/></svg><svg class="ic" style="left:316px;top:527px;" width="18" height="18"><use href="#gi_note" width="18" height="18"/></svg><div class="t" style="left:374px;top:528px;color:#000;letter-spacing:-0.17px">Make sure all presenters know how to use a/v equipment correctly</div><div class="t" style="left:813px;top:529px;width:140px;text-align:center;color:#000;">0 %</div><svg class="ic" style="left:959px;top:527px;" width="16" height="16"><use href="#gs_created" width="16" height="16"/></svg><div class="t" style="left:978px;top:529px;color:#000;">Created</div><div style="left:186px;top:547px;width:14px;height:19px;background:#ece9d8"></div><div style="left:200px;top:565px;width:889px;height:1px;background:#aca899"></div><div style="left:200px;top:547px;width:1px;height:19px;background:#aca899"></div><div class="t" style="left:222px;top:550px;color:#0000ff;letter-spacing:-0.19px">Make sure all presenters know how to use a/v equipment correctly</div><div style="left:186px;top:566px;width:14px;height:22px;background:#ece9d8"></div><div style="left:200px;top:587px;width:889px;height:1px;background:#aca899"></div><div style="left:200px;top:566px;width:1px;height:22px;background:#aca899"></div><div style="left:233px;top:566px;width:1px;height:22px;background:#aca899"></div><div style="left:371px;top:566px;width:1px;height:22px;background:#aca899"></div><div style="left:812px;top:566px;width:1px;height:22px;background:#aca899"></div><div style="left:953px;top:566px;width:1px;height:22px;background:#aca899"></div><div style="left:1089px;top:566px;width:1px;height:22px;background:#aca899"></div><div style="left:210px;top:570px;width:13px;height:13px;background:linear-gradient(135deg,#dcdcd6 0%,#f4f4f0 60%,#fff 100%);border:1px solid #1c5180"></div><div class="t" style="left:374px;top:569px;color:#000;letter-spacing:-0.17px">Prepare for rehearsals</div><div class="t" style="left:813px;top:570px;width:140px;text-align:center;color:#000;">0 %</div><svg class="ic" style="left:959px;top:568px;" width="16" height="16"><use href="#gs_created" width="16" height="16"/></svg><div class="t" style="left:978px;top:570px;color:#000;">Created</div><div style="left:186px;top:588px;width:14px;height:22px;background:#ece9d8"></div><div style="left:200px;top:588px;width:889px;height:22px;background:#316ac5"></div><div style="left:200px;top:609px;width:889px;height:1px;background:#aca899"></div><div style="left:200px;top:588px;width:1px;height:22px;background:#aca899"></div><div style="left:233px;top:588px;width:1px;height:22px;background:#aca899"></div><div style="left:371px;top:588px;width:1px;height:22px;background:#aca899"></div><div style="left:812px;top:588px;width:1px;height:22px;background:#aca899"></div><div style="left:953px;top:588px;width:1px;height:22px;background:#aca899"></div><div style="left:1089px;top:588px;width:1px;height:22px;background:#aca899"></div><div style="left:201px;top:588px;width:889px;height:21px;border:1px dotted #e8a040"></div><div style="left:210px;top:592px;width:13px;height:13px;background:linear-gradient(135deg,#dcdcd6 0%,#f4f4f0 60%,#fff 100%);border:1px solid #1c5180"></div><svg style="left:212px;top:595px" width="9" height="8"><path d="M0.5 3.5L3 6L8.5 0.5" stroke="#21a121" stroke-width="2" fill="none"/></svg><div class="t" style="left:374px;top:591px;color:#fff;text-decoration:line-through;letter-spacing:-0.17px">Practice, practice, practice, each time getting helpful feedback and improving</div><div style="left:815px;top:590px;width:135px;height:17px;background:linear-gradient(#9be89b 0px,#8ee38e 2px,#5ed85e 3px,#2ed12e 4px,#2ed12e 13px,#6ee26e 14px,#6ee26e 17px)"></div><div class="t" style="left:813px;top:592px;width:140px;text-align:center;color:#000;text-decoration:line-through;">100 %</div><div style="left:815px;top:592px;width:135px;height:14px;overflow:hidden"><div class="t" style="left:-2px;top:0;width:140px;text-align:center;color:#e030e0;text-decoration:line-through;">100 %</div></div><svg class="ic" style="left:957px;top:590px;" width="16" height="16"><use href="#gs_ok" width="16" height="16"/></svg><div class="t" style="left:978px;top:592px;color:#fff;">Ok</div><div style="left:976px;top:600px;width:16px;height:1px;background:#fff"></div><div style="left:186px;top:610px;width:14px;height:22px;background:#ece9d8"></div><div style="left:200px;top:631px;width:889px;height:1px;background:#aca899"></div><div style="left:200px;top:610px;width:1px;height:22px;background:#aca899"></div><div style="left:233px;top:610px;width:1px;height:22px;background:#aca899"></div><div style="left:371px;top:610px;width:1px;height:22px;background:#aca899"></div><div style="left:812px;top:610px;width:1px;height:22px;background:#aca899"></div><div style="left:953px;top:610px;width:1px;height:22px;background:#aca899"></div><div style="left:1089px;top:610px;width:1px;height:22px;background:#aca899"></div><div style="left:210px;top:614px;width:13px;height:13px;background:linear-gradient(135deg,#dcdcd6 0%,#f4f4f0 60%,#fff 100%);border:1px solid #1c5180"></div><div class="t" style="left:374px;top:613px;color:#000;letter-spacing:-0.17px">Use video and speaker coaching to polish your performance</div><div style="left:815px;top:612px;width:61px;height:17px;background:linear-gradient(#9be89b 0px,#8ee38e 2px,#5ed85e 3px,#2ed12e 4px,#2ed12e 13px,#6ee26e 14px,#6ee26e 17px)"></div><div class="t" style="left:813px;top:614px;width:140px;text-align:center;color:#000;">45 %</div><div style="left:815px;top:614px;width:61px;height:14px;overflow:hidden"><div class="t" style="left:-2px;top:0;width:140px;text-align:center;color:#e030e0;">45 %</div></div><svg class="ic" style="left:957px;top:612px;" width="16" height="16"><use href="#gs_open" width="16" height="16"/></svg><div class="t" style="left:978px;top:614px;color:#000;">Open</div><div style="left:186px;top:632px;width:14px;height:22px;background:#ece9d8"></div><div style="left:200px;top:653px;width:889px;height:1px;background:#aca899"></div><div style="left:200px;top:632px;width:1px;height:22px;background:#aca899"></div><div style="left:233px;top:632px;width:1px;height:22px;background:#aca899"></div><div style="left:371px;top:632px;width:1px;height:22px;background:#aca899"></div><div style="left:812px;top:632px;width:1px;height:22px;background:#aca899"></div><div style="left:953px;top:632px;width:1px;height:22px;background:#aca899"></div><div style="left:1089px;top:632px;width:1px;height:22px;background:#aca899"></div><div style="left:210px;top:636px;width:13px;height:13px;background:linear-gradient(135deg,#dcdcd6 0%,#f4f4f0 60%,#fff 100%);border:1px solid #1c5180"></div><div class="t" style="left:374px;top:635px;color:#000;letter-spacing:-0.17px">Test all parts of the presentation</div><div class="t" style="left:813px;top:636px;width:140px;text-align:center;color:#000;">0 %</div><svg class="ic" style="left:959px;top:634px;" width="16" height="16"><use href="#gs_created" width="16" height="16"/></svg><div class="t" style="left:978px;top:636px;color:#000;">Created</div><div style="left:186px;top:654px;width:14px;height:22px;background:#ece9d8"></div><div style="left:200px;top:675px;width:889px;height:1px;background:#aca899"></div><div style="left:200px;top:654px;width:1px;height:22px;background:#aca899"></div><div style="left:233px;top:654px;width:1px;height:22px;background:#aca899"></div><div style="left:371px;top:654px;width:1px;height:22px;background:#aca899"></div><div style="left:812px;top:654px;width:1px;height:22px;background:#aca899"></div><div style="left:953px;top:654px;width:1px;height:22px;background:#aca899"></div><div style="left:1089px;top:654px;width:1px;height:22px;background:#aca899"></div><div style="left:210px;top:658px;width:13px;height:13px;background:linear-gradient(135deg,#dcdcd6 0%,#f4f4f0 60%,#fff 100%);border:1px solid #1c5180"></div><div class="t" style="left:374px;top:657px;color:#000;letter-spacing:-0.17px">Arrive at the meeting room enough in advance to check it out on-site</div><div class="t" style="left:813px;top:658px;width:140px;text-align:center;color:#000;">0 %</div><svg class="ic" style="left:959px;top:656px;" width="16" height="16"><use href="#gs_created" width="16" height="16"/></svg><div class="t" style="left:978px;top:658px;color:#000;">Created</div><div style="left:186px;top:676px;width:14px;height:22px;background:#ece9d8"></div><div style="left:200px;top:697px;width:889px;height:1px;background:#aca899"></div><div style="left:200px;top:676px;width:1px;height:22px;background:#aca899"></div><div style="left:233px;top:676px;width:1px;height:22px;background:#aca899"></div><div style="left:371px;top:676px;width:1px;height:22px;background:#aca899"></div><div style="left:812px;top:676px;width:1px;height:22px;background:#aca899"></div><div style="left:953px;top:676px;width:1px;height:22px;background:#aca899"></div><div style="left:1089px;top:676px;width:1px;height:22px;background:#aca899"></div><div style="left:210px;top:680px;width:13px;height:13px;background:linear-gradient(135deg,#dcdcd6 0%,#f4f4f0 60%,#fff 100%);border:1px solid #1c5180"></div><div class="t" style="left:374px;top:679px;color:#000;letter-spacing:-0.17px">Track and control costs and schedule to ensure you're staying on course</div><div class="t" style="left:813px;top:680px;width:140px;text-align:center;color:#000;">0 %</div><svg class="ic" style="left:959px;top:678px;" width="16" height="16"><use href="#gs_created" width="16" height="16"/></svg><div class="t" style="left:978px;top:680px;color:#000;">Created</div><div style="left:186px;top:698px;width:903px;height:17px;background:#ece9d8"></div><div style="left:186px;top:715px;width:903px;height:1px;background:#aca899"></div><div style="left:1089px;top:698px;width:1px;height:18px;background:#aca899"></div><div style="left:189px;top:701px;width:9px;height:9px;background:linear-gradient(#fff,#dcdad0);border:1px solid #7d93b6;border-radius:2px"></div><div style="left:191px;top:705px;width:5px;height:1px;background:#000"></div><div class="t" style="left:203px;top:701px;">Category : Support</div><div style="left:186px;top:716px;width:14px;height:22px;background:#ece9d8"></div><div style="left:200px;top:737px;width:889px;height:1px;background:#aca899"></div><div style="left:200px;top:716px;width:1px;height:22px;background:#aca899"></div><div style="left:233px;top:716px;width:1px;height:22px;background:#aca899"></div><div style="left:371px;top:716px;width:1px;height:22px;background:#aca899"></div><div style="left:812px;top:716px;width:1px;height:22px;background:#aca899"></div><div style="left:953px;top:716px;width:1px;height:22px;background:#aca899"></div><div style="left:1089px;top:716px;width:1px;height:22px;background:#aca899"></div><div style="left:210px;top:720px;width:13px;height:13px;background:linear-gradient(135deg,#dcdcd6 0%,#f4f4f0 60%,#fff 100%);border:1px solid #1c5180"></div><svg class="ic" style="left:301px;top:718px;" width="19" height="19"><use href="#gi_bell" width="19" height="19"/></svg><div class="t" style="left:374px;top:719px;color:#000;letter-spacing:-0.17px">Again check how requirements dictate support</div><div class="t" style="left:813px;top:720px;width:140px;text-align:center;color:#000;">0 %</div><svg class="ic" style="left:959px;top:718px;" width="16" height="16"><use href="#gs_created" width="16" height="16"/></svg><div class="t" style="left:978px;top:720px;color:#000;">Created</div><div style="left:186px;top:738px;width:14px;height:22px;background:#ece9d8"></div><div style="left:200px;top:759px;width:889px;height:1px;background:#aca899"></div><div style="left:200px;top:738px;width:1px;height:22px;background:#aca899"></div><div style="left:233px;top:738px;width:1px;height:22px;background:#aca899"></div><div style="left:371px;top:738px;width:1px;height:22px;background:#aca899"></div><div style="left:812px;top:738px;width:1px;height:22px;background:#aca899"></div><div style="left:953px;top:738px;width:1px;height:22px;background:#aca899"></div><div style="left:1089px;top:738px;width:1px;height:22px;background:#aca899"></div><div style="left:210px;top:742px;width:13px;height:13px;background:linear-gradient(135deg,#dcdcd6 0%,#f4f4f0 60%,#fff 100%);border:1px solid #1c5180"></div><div class="t" style="left:374px;top:741px;color:#000;letter-spacing:-0.17px">Add to your outline the examples you will use to illustrate, substantiate or liven up.</div><div style="left:815px;top:740px;width:104px;height:17px;background:linear-gradient(#9be89b 0px,#8ee38e 2px,#5ed85e 3px,#2ed12e 4px,#2ed12e 13px,#6ee26e 14px,#6ee26e 17px)"></div><div class="t" style="left:813px;top:742px;width:140px;text-align:center;color:#000;">77 %</div><div style="left:815px;top:742px;width:104px;height:14px;overflow:hidden"><div class="t" style="left:-2px;top:0;width:140px;text-align:center;color:#e030e0;">77 %</div></div><svg class="ic" style="left:957px;top:740px;" width="16" height="16"><use href="#gs_open" width="16" height="16"/></svg><div class="t" style="left:978px;top:742px;color:#000;">Open</div><div style="left:186px;top:760px;width:14px;height:22px;background:#ece9d8"></div><div style="left:200px;top:781px;width:889px;height:1px;background:#aca899"></div><div style="left:200px;top:760px;width:1px;height:22px;background:#aca899"></div><div style="left:233px;top:760px;width:1px;height:22px;background:#aca899"></div><div style="left:371px;top:760px;width:1px;height:22px;background:#aca899"></div><div style="left:812px;top:760px;width:1px;height:22px;background:#aca899"></div><div style="left:953px;top:760px;width:1px;height:22px;background:#aca899"></div><div style="left:1089px;top:760px;width:1px;height:22px;background:#aca899"></div><div style="left:210px;top:764px;width:13px;height:13px;background:linear-gradient(135deg,#dcdcd6 0%,#f4f4f0 60%,#fff 100%);border:1px solid #1c5180"></div><div class="t" style="left:374px;top:763px;color:#000;letter-spacing:-0.17px">Develop details of examples, stories, statistical support, etc.</div><div style="left:815px;top:762px;width:122px;height:17px;background:linear-gradient(#9be89b 0px,#8ee38e 2px,#5ed85e 3px,#2ed12e 4px,#2ed12e 13px,#6ee26e 14px,#6ee26e 17px)"></div><div class="t" style="left:813px;top:764px;width:140px;text-align:center;color:#000;">90 %</div><div style="left:815px;top:764px;width:122px;height:14px;overflow:hidden"><div class="t" style="left:-2px;top:0;width:140px;text-align:center;color:#e030e0;">90 %</div></div><svg class="ic" style="left:957px;top:762px;" width="16" height="16"><use href="#gs_open" width="16" height="16"/></svg><div class="t" style="left:978px;top:764px;color:#000;">Open</div><div style="left:186px;top:782px;width:14px;height:22px;background:#ece9d8"></div><div style="left:200px;top:803px;width:889px;height:1px;background:#aca899"></div><div style="left:200px;top:782px;width:1px;height:22px;background:#aca899"></div><div style="left:233px;top:782px;width:1px;height:22px;background:#aca899"></div><div style="left:371px;top:782px;width:1px;height:22px;background:#aca899"></div><div style="left:812px;top:782px;width:1px;height:22px;background:#aca899"></div><div style="left:953px;top:782px;width:1px;height:22px;background:#aca899"></div><div style="left:1089px;top:782px;width:1px;height:22px;background:#aca899"></div><div style="left:210px;top:786px;width:13px;height:13px;background:linear-gradient(135deg,#dcdcd6 0%,#f4f4f0 60%,#fff 100%);border:1px solid #1c5180"></div><svg class="ic" style="left:316px;top:784px;" width="18" height="18"><use href="#gi_note" width="18" height="18"/></svg><div class="t" style="left:374px;top:785px;color:#000;letter-spacing:-0.17px">Transform the concepts from your story board to complete graphics</div><div style="left:815px;top:784px;width:68px;height:17px;background:linear-gradient(#9be89b 0px,#8ee38e 2px,#5ed85e 3px,#2ed12e 4px,#2ed12e 13px,#6ee26e 14px,#6ee26e 17px)"></div><div class="t" style="left:813px;top:786px;width:140px;text-align:center;color:#000;">50 %</div><div style="left:815px;top:786px;width:68px;height:14px;overflow:hidden"><div class="t" style="left:-2px;top:0;width:140px;text-align:center;color:#e030e0;">50 %</div></div><svg class="ic" style="left:957px;top:784px;" width="16" height="16"><use href="#gs_open" width="16" height="16"/></svg><div class="t" style="left:978px;top:786px;color:#000;">Open</div><div style="left:186px;top:804px;width:14px;height:22px;background:#ece9d8"></div><div style="left:200px;top:825px;width:889px;height:1px;background:#aca899"></div><div style="left:200px;top:804px;width:1px;height:22px;background:#aca899"></div><div style="left:233px;top:804px;width:1px;height:22px;background:#aca899"></div><div style="left:371px;top:804px;width:1px;height:22px;background:#aca899"></div><div style="left:812px;top:804px;width:1px;height:22px;background:#aca899"></div><div style="left:953px;top:804px;width:1px;height:22px;background:#aca899"></div><div style="left:1089px;top:804px;width:1px;height:22px;background:#aca899"></div><div style="left:210px;top:808px;width:13px;height:13px;background:linear-gradient(135deg,#dcdcd6 0%,#f4f4f0 60%,#fff 100%);border:1px solid #1c5180"></div><svg class="ic" style="left:286px;top:806px;" width="16" height="16"><use href="#gi_recur" width="16" height="16"/></svg><svg class="ic" style="left:316px;top:806px;" width="18" height="18"><use href="#gi_note" width="18" height="18"/></svg><div class="t" style="left:374px;top:807px;color:#000;letter-spacing:-0.17px">Review/test visual aids</div><div style="left:815px;top:806px;width:40px;height:17px;background:linear-gradient(#9be89b 0px,#8ee38e 2px,#5ed85e 3px,#2ed12e 4px,#2ed12e 13px,#6ee26e 14px,#6ee26e 17px)"></div><div class="t" style="left:813px;top:808px;width:140px;text-align:center;color:#000;">30 %</div><div style="left:815px;top:808px;width:40px;height:14px;overflow:hidden"><div class="t" style="left:-2px;top:0;width:140px;text-align:center;color:#e030e0;">30 %</div></div><svg class="ic" style="left:957px;top:806px;" width="16" height="16"><use href="#gs_open" width="16" height="16"/></svg><div class="t" style="left:978px;top:808px;color:#000;">Open</div><div style="left:186px;top:826px;width:14px;height:32px;background:#ece9d8"></div><div style="left:200px;top:857px;width:889px;height:1px;background:#aca899"></div><div style="left:200px;top:826px;width:1px;height:32px;background:#aca899"></div><div class="t" style="left:222px;top:829px;color:#0000ff;letter-spacing:-0.19px">VIP Organizer is a powerful and fully-featured tool to manage to-do list of your business tasks. It will help you create and track your professional tasks and events for your business. It</div><div class="t" style="left:222px;top:842px;color:#0000ff;letter-spacing:-0.19px">has a user-friendly and easy-to-use interface.</div><div style="left:186px;top:858px;width:14px;height:22px;background:#ece9d8"></div><div style="left:200px;top:879px;width:889px;height:1px;background:#aca899"></div><div style="left:200px;top:858px;width:1px;height:22px;background:#aca899"></div><div style="left:233px;top:858px;width:1px;height:22px;background:#aca899"></div><div style="left:371px;top:858px;width:1px;height:22px;background:#aca899"></div><div style="left:812px;top:858px;width:1px;height:22px;background:#aca899"></div><div style="left:953px;top:858px;width:1px;height:22px;background:#aca899"></div><div style="left:1089px;top:858px;width:1px;height:22px;background:#aca899"></div><div style="left:210px;top:862px;width:13px;height:13px;background:linear-gradient(135deg,#dcdcd6 0%,#f4f4f0 60%,#fff 100%);border:1px solid #1c5180"></div><div class="t" style="left:374px;top:861px;color:#000;letter-spacing:-0.17px">Refine graphics to get best effectiveness</div><div class="t" style="left:813px;top:862px;width:140px;text-align:center;color:#000;">0 %</div><svg class="ic" style="left:959px;top:860px;" width="16" height="16"><use href="#gs_created" width="16" height="16"/></svg><div class="t" style="left:978px;top:862px;color:#000;">Created</div><div style="left:186px;top:880px;width:14px;height:22px;background:#ece9d8"></div><div style="left:200px;top:901px;width:889px;height:1px;background:#aca899"></div><div style="left:200px;top:880px;width:1px;height:22px;background:#aca899"></div><div style="left:233px;top:880px;width:1px;height:22px;background:#aca899"></div><div style="left:371px;top:880px;width:1px;height:22px;background:#aca899"></div><div style="left:812px;top:880px;width:1px;height:22px;background:#aca899"></div><div style="left:953px;top:880px;width:1px;height:22px;background:#aca899"></div><div style="left:1089px;top:880px;width:1px;height:22px;background:#aca899"></div><div style="left:210px;top:884px;width:13px;height:13px;background:linear-gradient(135deg,#dcdcd6 0%,#f4f4f0 60%,#fff 100%);border:1px solid #1c5180"></div><svg style="left:212px;top:887px" width="9" height="8"><path d="M0.5 3.5L3 6L8.5 0.5" stroke="#21a121" stroke-width="2" fill="none"/></svg><div class="t" style="left:374px;top:883px;color:#000;text-decoration:line-through;letter-spacing:-0.17px">Now complete your delivery script</div><div style="left:374px;top:890px;width:316px;height:1px;background:#000"></div><div style="left:815px;top:882px;width:135px;height:17px;background:linear-gradient(#9be89b 0px,#8ee38e 2px,#5ed85e 3px,#2ed12e 4px,#2ed12e 13px,#6ee26e 14px,#6ee26e 17px)"></div><div class="t" style="left:813px;top:884px;width:140px;text-align:center;color:#000;text-decoration:line-through;">100 %</div><div style="left:815px;top:884px;width:135px;height:14px;overflow:hidden"><div class="t" style="left:-2px;top:0;width:140px;text-align:center;color:#e030e0;text-decoration:line-through;">100 %</div></div><svg class="ic" style="left:957px;top:882px;" width="16" height="16"><use href="#gs_ok" width="16" height="16"/></svg><div class="t" style="left:978px;top:884px;color:#000;">Ok</div><div style="left:976px;top:892px;width:16px;height:1px;background:#000"></div><div style="left:186px;top:902px;width:14px;height:22px;background:#ece9d8"></div><div style="left:200px;top:923px;width:889px;height:1px;background:#aca899"></div><div style="left:200px;top:902px;width:1px;height:22px;background:#aca899"></div><div style="left:233px;top:902px;width:1px;height:22px;background:#aca899"></div><div style="left:371px;top:902px;width:1px;height:22px;background:#aca899"></div><div style="left:812px;top:902px;width:1px;height:22px;background:#aca899"></div><div style="left:953px;top:902px;width:1px;height:22px;background:#aca899"></div><div style="left:1089px;top:902px;width:1px;height:22px;background:#aca899"></div><div style="left:210px;top:906px;width:13px;height:13px;background:linear-gradient(135deg,#dcdcd6 0%,#f4f4f0 60%,#fff 100%);border:1px solid #1c5180"></div><div class="t" style="left:374px;top:905px;color:#000;letter-spacing:-0.17px">moves one o</div><div class="t" style="left:813px;top:906px;width:140px;text-align:center;color:#000;">0 %</div><svg class="ic" style="left:959px;top:904px;" width="16" height="16"><use href="#gs_created" width="16" height="16"/></svg><div class="t" style="left:978px;top:906px;color:#000;">Created</div><div style="left:186px;top:924px;width:14px;height:22px;background:#ece9d8"></div><div style="left:200px;top:945px;width:889px;height:1px;background:#aca899"></div><div style="left:200px;top:924px;width:1px;height:22px;background:#aca899"></div><div style="left:233px;top:924px;width:1px;height:22px;background:#aca899"></div><div style="left:371px;top:924px;width:1px;height:22px;background:#aca899"></div><div style="left:812px;top:924px;width:1px;height:22px;background:#aca899"></div><div style="left:953px;top:924px;width:1px;height:22px;background:#aca899"></div><div style="left:1089px;top:924px;width:1px;height:22px;background:#aca899"></div><div style="left:210px;top:928px;width:13px;height:13px;background:linear-gradient(135deg,#dcdcd6 0%,#f4f4f0 60%,#fff 100%);border:1px solid #1c5180"></div><div class="t" style="left:374px;top:927px;color:#000;letter-spacing:-0.17px">Develop backup charts and plan</div><div class="t" style="left:813px;top:928px;width:140px;text-align:center;color:#000;">0 %</div><svg class="ic" style="left:959px;top:926px;" width="16" height="16"><use href="#gs_created" width="16" height="16"/></svg><div class="t" style="left:978px;top:928px;color:#000;">Created</div><div style="left:186px;top:946px;width:14px;height:22px;background:#ece9d8"></div><div style="left:200px;top:967px;width:889px;height:1px;background:#aca899"></div><div style="left:200px;top:946px;width:1px;height:22px;background:#aca899"></div><div style="left:233px;top:946px;width:1px;height:22px;background:#aca899"></div><div style="left:371px;top:946px;width:1px;height:22px;background:#aca899"></div><div style="left:812px;top:946px;width:1px;height:22px;background:#aca899"></div><div style="left:953px;top:946px;width:1px;height:22px;background:#aca899"></div><div style="left:1089px;top:946px;width:1px;height:22px;background:#aca899"></div><div style="left:210px;top:950px;width:13px;height:13px;background:linear-gradient(135deg,#dcdcd6 0%,#f4f4f0 60%,#fff 100%);border:1px solid #1c5180"></div><div class="t" style="left:374px;top:949px;color:#000;letter-spacing:-0.17px">Meet printing deadlines</div><div class="t" style="left:813px;top:950px;width:140px;text-align:center;color:#000;">0 %</div><svg class="ic" style="left:959px;top:948px;" width="16" height="16"><use href="#gs_created" width="16" height="16"/></svg><div class="t" style="left:978px;top:950px;color:#000;">Created</div><div style="left:186px;top:975px;width:922px;height:1px;background:#7f9db9"></div><div style="left:1090px;top:149px;width:17px;height:826px;background:linear-gradient(90deg,#f3f1ec,#fefefe)"></div><div style="left:1091px;top:150px;width:15px;height:17px;background:linear-gradient(135deg,#c8d8fb,#b5cbf6);border:1px solid #bcd0f4;border-radius:2px"></div><svg style="left:1094px;top:155px" width="9" height="6"><path d="M1 5L4.5 1.5L8 5" stroke="#4d6185" stroke-width="2" fill="none"/></svg><div style="left:1091px;top:524px;width:15px;height:433px;background:linear-gradient(90deg,#c8d7f7,#bcd0f6 60%,#b0c5f0);border:1px solid #a8bff0;border-radius:2px"></div><div style="left:1095px;top:737px;width:7px;height:1px;background:#eef3fd"></div><div style="left:1095px;top:739px;width:7px;height:1px;background:#eef3fd"></div><div style="left:1095px;top:741px;width:7px;height:1px;background:#eef3fd"></div><div style="left:1095px;top:743px;width:7px;height:1px;background:#eef3fd"></div><div style="left:1091px;top:958px;width:15px;height:17px;background:linear-gradient(135deg,#c8d8fb,#b5cbf6);border:1px solid #bcd0f4;border-radius:2px"></div><svg style="left:1094px;top:964px" width="9" height="6"><path d="M1 1L4.5 4.5L8 1" stroke="#4d6185" stroke-width="2" fill="none"/></svg><div style="left:186px;top:976px;width:921px;height:27px;background:linear-gradient(#fcfcfb,#f1f0ea)"></div><div style="left:189px;top:978px;width:74px;height:25px;background:linear-gradient(#fbfbfa,#efeee9);border:1px solid #8fa5c4;border-bottom:none;border-radius:3px 3px 0 0"></div><div class="t" style="left:190px;top:985px;">Search result</div><div style="left:1110px;top:123px;width:168px;height:22px;background:#d4dff6;border:1px solid #d2cfc0;border-radius:4px"></div><div class="t" style="left:1114px;top:128px;">Categories Bar</div><svg class="ic" style="left:1230px;top:128px;" width="13" height="13"><use href="#hb_max" width="13" height="13"/></svg><svg class="ic" style="left:1246px;top:127px;" width="12" height="13"><use href="#hb_pin" width="12" height="13"/></svg><svg class="ic" style="left:1261px;top:128px;" width="13" height="13"><use href="#hb_close" width="13" height="13"/></svg><div style="left:1110px;top:147px;width:168px;height:183px;background:#fff;border:1px solid #7f9db9"></div><div style="left:1116px;top:152px;width:9px;height:9px;background:linear-gradient(#fff,#d8d6cc);border:1px solid #7d93b6;border-radius:2px"></div><div style="left:1118px;top:156px;width:5px;height:1px;background:#000"></div><div style="left:1120px;top:154px;width:1px;height:5px;background:#000"></div><div style="left:1126px;top:156px;width:4px;height:1px;background:repeating-linear-gradient(90deg,#999 0 1px,transparent 1px 2px)"></div><svg class="ic" style="left:1131px;top:152px;" width="14" height="13"><use href="#ct_folder" width="14" height="13"/></svg><svg class="ic" style="left:1152px;top:151px;" width="17" height="16"><use href="#ct_people" width="17" height="16"/></svg><div class="t" style="left:1172px;top:151px;">Create a Winning Pre</div><div style="left:1116px;top:170px;width:9px;height:9px;background:linear-gradient(#fff,#d8d6cc);border:1px solid #7d93b6;border-radius:2px"></div><div style="left:1118px;top:174px;width:5px;height:1px;background:#000"></div><div style="left:1120px;top:172px;width:1px;height:5px;background:#000"></div><div style="left:1126px;top:174px;width:4px;height:1px;background:repeating-linear-gradient(90deg,#999 0 1px,transparent 1px 2px)"></div><svg class="ic" style="left:1131px;top:170px;" width="14" height="13"><use href="#ct_folder" width="14" height="13"/></svg><svg class="ic" style="left:1152px;top:169px;" width="17" height="16"><use href="#ct_people" width="17" height="16"/></svg><div class="t" style="left:1172px;top:169px;">Deliver</div><div style="left:1116px;top:188px;width:9px;height:9px;background:linear-gradient(#fff,#d8d6cc);border:1px solid #7d93b6;border-radius:2px"></div><div style="left:1118px;top:192px;width:5px;height:1px;background:#000"></div><div style="left:1120px;top:190px;width:1px;height:5px;background:#000"></div><div style="left:1126px;top:192px;width:4px;height:1px;background:repeating-linear-gradient(90deg,#999 0 1px,transparent 1px 2px)"></div><svg class="ic" style="left:1131px;top:188px;" width="14" height="13"><use href="#ct_folder" width="14" height="13"/></svg><svg class="ic" style="left:1152px;top:187px;" width="17" height="16"><use href="#ct_people" width="17" height="16"/></svg><div class="t" style="left:1172px;top:187px;">Follow-up</div><div style="left:1120px;top:161px;width:1px;height:9px;background:repeating-linear-gradient(#999 0 1px,transparent 1px 2px)"></div><div style="left:1120px;top:179px;width:1px;height:9px;background:repeating-linear-gradient(#999 0 1px,transparent 1px 2px)"></div><div style="left:1149px;top:166px;width:128px;height:18px;border:1px solid #000"></div><div style="left:1110px;top:334px;width:168px;height:22px;background:linear-gradient(#fbfbf8,#efeee7);border:1px solid #d2cfc0;border-radius:4px"></div><div class="t" style="left:1114px;top:339px;">Filters Bar</div><svg class="ic" style="left:1230px;top:339px;" width="13" height="13"><use href="#hb_max" width="13" height="13"/></svg><svg class="ic" style="left:1246px;top:338px;" width="12" height="13"><use href="#hb_pin" width="12" height="13"/></svg><svg class="ic" style="left:1261px;top:339px;" width="13" height="13"><use href="#hb_close" width="13" height="13"/></svg><div style="left:1109px;top:357px;width:1px;height:320px;background:#a9b8cc"></div><div class="t" style="left:1119px;top:364px;font:bold 11.5px/13px 'Liberation Sans',sans-serif">Filter By Done:</div><div style="left:1118px;top:382px;width:121px;height:21px;background:#fff;border:1px solid #7f9db9"></div><div class="t" style="left:1122px;top:386px;">All</div><div style="left:1222px;top:384px;width:15px;height:17px;background:linear-gradient(#d5e2fb,#b4cbf5);border-radius:2px"></div><svg style="left:1225px;top:390px" width="9" height="6"><path d="M1 1L4.5 4.5L8 1" stroke="#4d6185" stroke-width="2" fill="none"/></svg><div class="t" style="left:1119px;top:412px;font:bold 11.5px/13px 'Liberation Sans',sans-serif">Filter By Due Date:</div><svg style="left:1122px;top:437px" width="5" height="9"><path d="M4 0V8L0 4Z" fill="#000"/></svg><svg style="left:1255px;top:437px" width="5" height="9"><path d="M0 0V8L4 4Z" fill="#000"/></svg><div class="t" style="left:1151px;top:436px;">December 2005</div><div style="left:1115px;top:450px;width:150px;height:1px;background:#000"></div><div class="t" style="left:1128px;top:452px;width:20px;text-align:center">S</div><div class="t" style="left:1146px;top:452px;width:20px;text-align:center">M</div><div class="t" style="left:1164px;top:452px;width:20px;text-align:center">T</div><div class="t" style="left:1182px;top:452px;width:20px;text-align:center">W</div><div class="t" style="left:1200px;top:452px;width:20px;text-align:center">T</div><div class="t" style="left:1218px;top:452px;width:20px;text-align:center">F</div><div class="t" style="left:1236px;top:452px;width:20px;text-align:center">S</div><div style="left:1127px;top:466px;width:126px;height:1px;background:#aca899"></div><div class="t" style="left:1122px;top:469px;width:20px;text-align:right;color:#aca899">27</div><div class="t" style="left:1140px;top:469px;width:20px;text-align:right;color:#aca899">28</div><div class="t" style="left:1158px;top:469px;width:20px;text-align:right;color:#aca899">29</div><div class="t" style="left:1176px;top:469px;width:20px;text-align:right;color:#aca899">30</div><div class="t" style="left:1194px;top:469px;width:20px;text-align:right;color:#000">1</div><div class="t" style="left:1212px;top:469px;width:20px;text-align:right;color:#000">2</div><div class="t" style="left:1230px;top:469px;width:20px;text-align:right;color:#000">3</div><div class="t" style="left:1122px;top:484px;width:20px;text-align:right;color:#000">4</div><div class="t" style="left:1140px;top:484px;width:20px;text-align:right;color:#000">5</div><div class="t" style="left:1158px;top:484px;width:20px;text-align:right;color:#000">6</div><div class="t" style="left:1176px;top:484px;width:20px;text-align:right;color:#000">7</div><div class="t" style="left:1194px;top:484px;width:20px;text-align:right;color:#000">8</div><div class="t" style="left:1212px;top:484px;width:20px;text-align:right;color:#000">9</div><div class="t" style="left:1230px;top:484px;width:20px;text-align:right;color:#000">10</div><div class="t" style="left:1122px;top:499px;width:20px;text-align:right;color:#000">11</div><div style="left:1145px;top:498px;width:18px;height:15px;background:#316ac5;border:1px solid #8b2d1a"></div><div class="t" style="left:1140px;top:499px;width:20px;text-align:right;color:#fff">12</div><div class="t" style="left:1158px;top:499px;width:20px;text-align:right;color:#000">13</div><div class="t" style="left:1176px;top:499px;width:20px;text-align:right;color:#000">14</div><div class="t" style="left:1194px;top:499px;width:20px;text-align:right;color:#000">15</div><div class="t" style="left:1212px;top:499px;width:20px;text-align:right;color:#000">16</div><div class="t" style="left:1230px;top:499px;width:20px;text-align:right;color:#000">17</div><div class="t" style="left:1122px;top:514px;width:20px;text-align:right;color:#000">18</div><div class="t" style="left:1140px;top:514px;width:20px;text-align:right;color:#000">19</div><div class="t" style="left:1158px;top:514px;width:20px;text-align:right;color:#000">20</div><div class="t" style="left:1176px;top:514px;width:20px;text-align:right;color:#000">21</div><div class="t" style="left:1194px;top:514px;width:20px;text-align:right;color:#000">22</div><div class="t" style="left:1212px;top:514px;width:20px;text-align:right;color:#000">23</div><div class="t" style="left:1230px;top:514px;width:20px;text-align:right;color:#000">24</div><div class="t" style="left:1122px;top:529px;width:20px;text-align:right;color:#000">25</div><div class="t" style="left:1140px;top:529px;width:20px;text-align:right;color:#000">26</div><div class="t" style="left:1158px;top:529px;width:20px;text-align:right;color:#000">27</div><div class="t" style="left:1176px;top:529px;width:20px;text-align:right;color:#000">28</div><div class="t" style="left:1194px;top:529px;width:20px;text-align:right;color:#000">29</div><div class="t" style="left:1212px;top:529px;width:20px;text-align:right;color:#000">30</div><div class="t" style="left:1230px;top:529px;width:20px;text-align:right;color:#000">31</div><div class="t" style="left:1122px;top:544px;width:20px;text-align:right;color:#aca899">1</div><div class="t" style="left:1140px;top:544px;width:20px;text-align:right;color:#aca899">2</div><div class="t" style="left:1158px;top:544px;width:20px;text-align:right;color:#aca899">3</div><div class="t" style="left:1176px;top:544px;width:20px;text-align:right;color:#aca899">4</div><div class="t" style="left:1194px;top:544px;width:20px;text-align:right;color:#aca899">5</div><div class="t" style="left:1212px;top:544px;width:20px;text-align:right;color:#aca899">6</div><div class="t" style="left:1230px;top:544px;width:20px;text-align:right;color:#aca899">7</div><div style="left:1127px;top:558px;width:126px;height:1px;background:#aca899"></div><div style="left:1134px;top:564px;width:47px;height:19px;background:linear-gradient(#fff,#ecebe6 80%,#d6d0c5);border:1px solid #003c74;border-radius:3px"></div><div class="t" style="left:1134px;top:566px;width:47px;text-align:center;font:bold 13.5px/15px 'Liberation Sans',sans-serif;color:#aca899">Today</div><div style="left:1200px;top:564px;width:47px;height:19px;background:linear-gradient(#fff,#ecebe6 80%,#d6d0c5);border:1px solid #003c74;border-radius:3px"></div><div class="t" style="left:1200px;top:566px;width:47px;text-align:center;font:bold 13.5px/15px 'Liberation Sans',sans-serif;color:#aca899">Clear</div><div style="left:1118px;top:598px;width:145px;height:21px;background:#fff;border:1px solid #7f9db9"></div><div class="t" style="left:1122px;top:602px;">is less than or equal to</div><div style="left:1246px;top:600px;width:15px;height:17px;background:linear-gradient(#d5e2fb,#b4cbf5);border-radius:2px"></div><svg style="left:1249px;top:606px" width="9" height="6"><path d="M1 1L4.5 4.5L8 1" stroke="#4d6185" stroke-width="2" fill="none"/></svg><div style="left:1108px;top:677px;width:172px;height:1px;background:#c5c2b2"></div><div style="left:1110px;top:681px;width:168px;height:22px;background:linear-gradient(#fbfbf8,#efeee7);border:1px solid #d2cfc0;border-radius:4px"></div><div class="t" style="left:1114px;top:686px;">Resource Assignmen...</div><svg class="ic" style="left:1230px;top:686px;" width="13" height="13"><use href="#hb_max" width="13" height="13"/></svg><svg class="ic" style="left:1246px;top:685px;" width="12" height="13"><use href="#hb_pin" width="12" height="13"/></svg><svg class="ic" style="left:1261px;top:686px;" width="13" height="13"><use href="#hb_close" width="13" height="13"/></svg><div style="left:1110px;top:705px;width:168px;height:297px;background:#fff;border:1px solid #7f9db9"></div><div style="left:0px;top:1002px;width:1280px;height:1px;background:#f6f4ea"></div><div style="left:0px;top:1003px;width:1280px;height:2px;background:linear-gradient(#b0ad9e,#cfccbe)"></div><div style="left:0px;top:1005px;width:1280px;height:17px;background:linear-gradient(90deg,#f0efe9,#ece9d8 40%)"></div><div style="left:0px;top:1022px;width:1280px;height:2px;background:#2e68d8"></div>
</body></html>
